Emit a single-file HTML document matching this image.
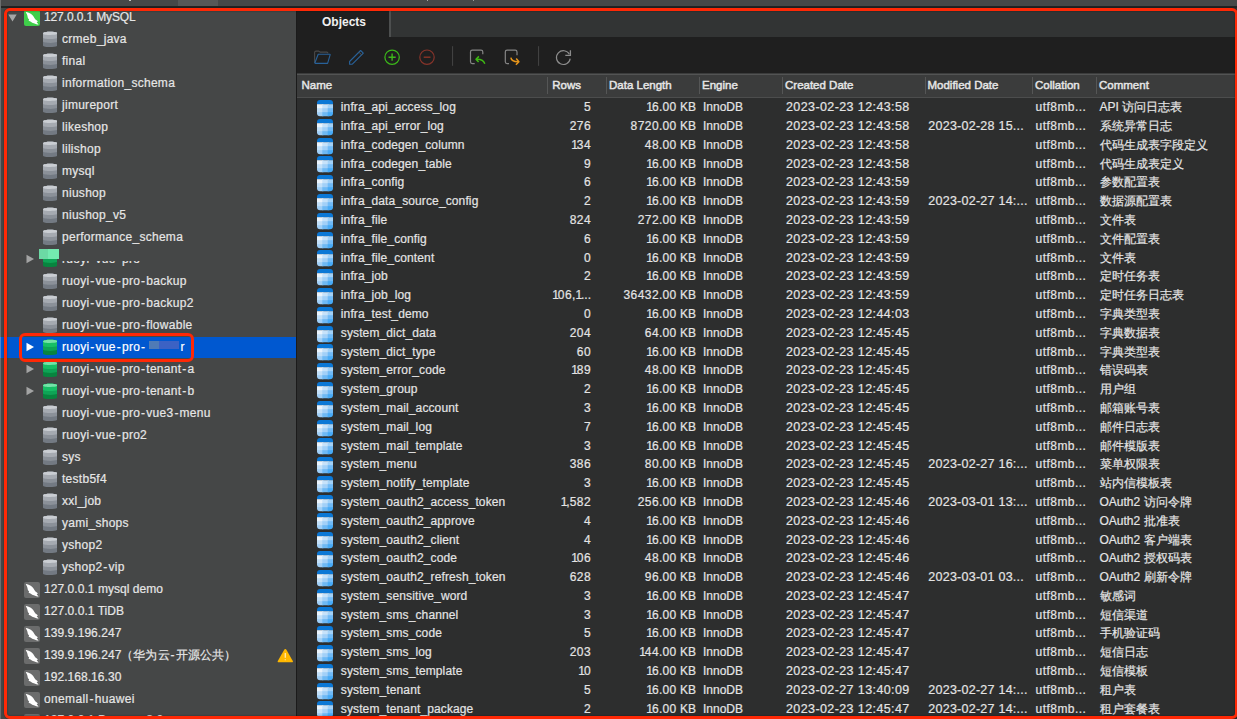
<!DOCTYPE html><html><head><meta charset="utf-8"><style>
html,body{margin:0;padding:0;}
body{width:1237px;height:719px;overflow:hidden;position:relative;background:#2d2e2e;font-family:"Liberation Sans",sans-serif;}
.ab{position:absolute;display:block;}
.t{position:absolute;white-space:pre;font-size:12px;line-height:20px;color:#e4e4e4;-webkit-text-stroke:0.2px currentColor;}
.hy{margin:0 0.95px;}
.sb{position:absolute;white-space:pre;font-size:12px;line-height:22px;color:#e6e6e6;letter-spacing:0.28px;-webkit-text-stroke:0.2px currentColor;}
</style></head><body>
<div class="ab" style="left:0;top:0;width:1237px;height:6px;background:#464848"></div>
<div class="ab" style="left:178px;top:0;width:40.3px;height:5.6px;background:#565858"></div>
<div class="ab" style="left:129px;top:0;width:1.6px;height:1.4px;border-radius:1px;background:#d8d8d8"></div>
<div class="ab" style="left:426.5px;top:0;width:1.5px;height:1.3px;border-radius:1px;background:#c8c8c8"></div>
<div class="ab" style="left:472.5px;top:0;width:1.3px;height:1.3px;border-radius:1px;background:#b8b8b8"></div>
<div class="ab" style="left:0;top:6px;width:1237px;height:2px;background:#232424"></div>
<div class="ab" style="left:0;top:8px;width:296px;height:711px;background:#454747"></div>
<div class="ab" style="left:0;top:0;width:1.3px;height:719px;background:#6c6e6e"></div>
<div class="ab" style="left:296px;top:8px;width:1px;height:711px;background:#1b1b1b"></div>
<div class="ab" style="left:0;top:336.80px;width:296px;height:21.4px;background:#0058d0"></div>
<div class="ab" style="left:0;top:336.80px;width:1.3px;height:21.4px;background:#4d86d6"></div>
<svg class="ab" style="left:8px;top:13.80px" width="9" height="8" viewBox="0 0 9 8"><path d="M0.3 0.5 L8.7 0.5 L4.5 7.5 Z" fill="#a5a6a6"/></svg>
<svg class="ab" style="left:24px;top:10.1px" width="16" height="16" viewBox="0 0 16 16"><rect x="0" y="0" width="16" height="16" rx="2" fill="#3fcf4a"/><path d="M1.8 1.95 C2.6 2 3.5 2.2 5.15 2.92 C6 3.3 6.6 3.6 7.1 4 C8.9 5.4 9.7 6.7 10.4 8.1 C11 9.2 11.8 10 12.9 10.6 L13.9 11.4 L12.7 12.2 L14.6 14.5 C13.8 14.4 13 14.3 12.4 14.2 C11.5 14 10.6 13.7 9.9 13.35 C9.1 13 8.5 12.8 7.9 12.5 C7.4 12.2 6.9 11.8 6.5 11.4 L4.6 10.85 L5.15 9.46 C4.6 9.1 4.2 8.7 4.0 8.35 C3.7 7.6 3.5 6.8 3.5 6.1 C3.3 5.4 3.2 4.8 2.9 4.2 C2.6 3.6 2.3 3.2 2.1 2.8 Z" fill="#fff"/></svg>
<div class="sb" style="left:44px;top:5.93px;letter-spacing:-0.12px">127.0.0.1 MySQL</div>
<svg class="ab" style="left:42.9px;top:31.289999999999996px" width="14.5" height="16.5" viewBox="0 0 14.5 16.5"><path d="M0 2.4 C0 0.3 14.5 0.3 14.5 2.4 L14.5 14.4 C14.5 16.6 0 16.6 0 14.4 Z" fill="#737a83"/><path d="M0 2.4 C0 0.3 14.5 0.3 14.5 2.4 L14.5 10.6 C14.5 12.3 0 12.3 0 10.6 Z" fill="#8b9199"/><path d="M0 2.4 C0 0.3 14.5 0.3 14.5 2.4 L14.5 6.8 C14.5 8.5 0 8.5 0 6.8 Z" fill="#a5aab1"/><path d="M0 2.4 C0 0.3 14.5 0.3 14.5 2.4 C14.5 4.4 0 4.4 0 2.4 Z" fill="#c9cdd2"/></svg>
<div class="sb" style="left:62px;top:27.92px">crmeb_java</div>
<svg class="ab" style="left:42.9px;top:53.279999999999994px" width="14.5" height="16.5" viewBox="0 0 14.5 16.5"><path d="M0 2.4 C0 0.3 14.5 0.3 14.5 2.4 L14.5 14.4 C14.5 16.6 0 16.6 0 14.4 Z" fill="#737a83"/><path d="M0 2.4 C0 0.3 14.5 0.3 14.5 2.4 L14.5 10.6 C14.5 12.3 0 12.3 0 10.6 Z" fill="#8b9199"/><path d="M0 2.4 C0 0.3 14.5 0.3 14.5 2.4 L14.5 6.8 C14.5 8.5 0 8.5 0 6.8 Z" fill="#a5aab1"/><path d="M0 2.4 C0 0.3 14.5 0.3 14.5 2.4 C14.5 4.4 0 4.4 0 2.4 Z" fill="#c9cdd2"/></svg>
<div class="sb" style="left:62px;top:49.91px">final</div>
<svg class="ab" style="left:42.9px;top:75.27px" width="14.5" height="16.5" viewBox="0 0 14.5 16.5"><path d="M0 2.4 C0 0.3 14.5 0.3 14.5 2.4 L14.5 14.4 C14.5 16.6 0 16.6 0 14.4 Z" fill="#737a83"/><path d="M0 2.4 C0 0.3 14.5 0.3 14.5 2.4 L14.5 10.6 C14.5 12.3 0 12.3 0 10.6 Z" fill="#8b9199"/><path d="M0 2.4 C0 0.3 14.5 0.3 14.5 2.4 L14.5 6.8 C14.5 8.5 0 8.5 0 6.8 Z" fill="#a5aab1"/><path d="M0 2.4 C0 0.3 14.5 0.3 14.5 2.4 C14.5 4.4 0 4.4 0 2.4 Z" fill="#c9cdd2"/></svg>
<div class="sb" style="left:62px;top:71.90px">information_schema</div>
<svg class="ab" style="left:42.9px;top:97.25999999999999px" width="14.5" height="16.5" viewBox="0 0 14.5 16.5"><path d="M0 2.4 C0 0.3 14.5 0.3 14.5 2.4 L14.5 14.4 C14.5 16.6 0 16.6 0 14.4 Z" fill="#737a83"/><path d="M0 2.4 C0 0.3 14.5 0.3 14.5 2.4 L14.5 10.6 C14.5 12.3 0 12.3 0 10.6 Z" fill="#8b9199"/><path d="M0 2.4 C0 0.3 14.5 0.3 14.5 2.4 L14.5 6.8 C14.5 8.5 0 8.5 0 6.8 Z" fill="#a5aab1"/><path d="M0 2.4 C0 0.3 14.5 0.3 14.5 2.4 C14.5 4.4 0 4.4 0 2.4 Z" fill="#c9cdd2"/></svg>
<div class="sb" style="left:62px;top:93.89px">jimureport</div>
<svg class="ab" style="left:42.9px;top:119.24999999999999px" width="14.5" height="16.5" viewBox="0 0 14.5 16.5"><path d="M0 2.4 C0 0.3 14.5 0.3 14.5 2.4 L14.5 14.4 C14.5 16.6 0 16.6 0 14.4 Z" fill="#737a83"/><path d="M0 2.4 C0 0.3 14.5 0.3 14.5 2.4 L14.5 10.6 C14.5 12.3 0 12.3 0 10.6 Z" fill="#8b9199"/><path d="M0 2.4 C0 0.3 14.5 0.3 14.5 2.4 L14.5 6.8 C14.5 8.5 0 8.5 0 6.8 Z" fill="#a5aab1"/><path d="M0 2.4 C0 0.3 14.5 0.3 14.5 2.4 C14.5 4.4 0 4.4 0 2.4 Z" fill="#c9cdd2"/></svg>
<div class="sb" style="left:62px;top:115.88px">likeshop</div>
<svg class="ab" style="left:42.9px;top:141.24px" width="14.5" height="16.5" viewBox="0 0 14.5 16.5"><path d="M0 2.4 C0 0.3 14.5 0.3 14.5 2.4 L14.5 14.4 C14.5 16.6 0 16.6 0 14.4 Z" fill="#737a83"/><path d="M0 2.4 C0 0.3 14.5 0.3 14.5 2.4 L14.5 10.6 C14.5 12.3 0 12.3 0 10.6 Z" fill="#8b9199"/><path d="M0 2.4 C0 0.3 14.5 0.3 14.5 2.4 L14.5 6.8 C14.5 8.5 0 8.5 0 6.8 Z" fill="#a5aab1"/><path d="M0 2.4 C0 0.3 14.5 0.3 14.5 2.4 C14.5 4.4 0 4.4 0 2.4 Z" fill="#c9cdd2"/></svg>
<div class="sb" style="left:62px;top:137.87px">lilishop</div>
<svg class="ab" style="left:42.9px;top:163.23px" width="14.5" height="16.5" viewBox="0 0 14.5 16.5"><path d="M0 2.4 C0 0.3 14.5 0.3 14.5 2.4 L14.5 14.4 C14.5 16.6 0 16.6 0 14.4 Z" fill="#737a83"/><path d="M0 2.4 C0 0.3 14.5 0.3 14.5 2.4 L14.5 10.6 C14.5 12.3 0 12.3 0 10.6 Z" fill="#8b9199"/><path d="M0 2.4 C0 0.3 14.5 0.3 14.5 2.4 L14.5 6.8 C14.5 8.5 0 8.5 0 6.8 Z" fill="#a5aab1"/><path d="M0 2.4 C0 0.3 14.5 0.3 14.5 2.4 C14.5 4.4 0 4.4 0 2.4 Z" fill="#c9cdd2"/></svg>
<div class="sb" style="left:62px;top:159.86px">mysql</div>
<svg class="ab" style="left:42.9px;top:185.22px" width="14.5" height="16.5" viewBox="0 0 14.5 16.5"><path d="M0 2.4 C0 0.3 14.5 0.3 14.5 2.4 L14.5 14.4 C14.5 16.6 0 16.6 0 14.4 Z" fill="#737a83"/><path d="M0 2.4 C0 0.3 14.5 0.3 14.5 2.4 L14.5 10.6 C14.5 12.3 0 12.3 0 10.6 Z" fill="#8b9199"/><path d="M0 2.4 C0 0.3 14.5 0.3 14.5 2.4 L14.5 6.8 C14.5 8.5 0 8.5 0 6.8 Z" fill="#a5aab1"/><path d="M0 2.4 C0 0.3 14.5 0.3 14.5 2.4 C14.5 4.4 0 4.4 0 2.4 Z" fill="#c9cdd2"/></svg>
<div class="sb" style="left:62px;top:181.85px">niushop</div>
<svg class="ab" style="left:42.9px;top:207.21px" width="14.5" height="16.5" viewBox="0 0 14.5 16.5"><path d="M0 2.4 C0 0.3 14.5 0.3 14.5 2.4 L14.5 14.4 C14.5 16.6 0 16.6 0 14.4 Z" fill="#737a83"/><path d="M0 2.4 C0 0.3 14.5 0.3 14.5 2.4 L14.5 10.6 C14.5 12.3 0 12.3 0 10.6 Z" fill="#8b9199"/><path d="M0 2.4 C0 0.3 14.5 0.3 14.5 2.4 L14.5 6.8 C14.5 8.5 0 8.5 0 6.8 Z" fill="#a5aab1"/><path d="M0 2.4 C0 0.3 14.5 0.3 14.5 2.4 C14.5 4.4 0 4.4 0 2.4 Z" fill="#c9cdd2"/></svg>
<div class="sb" style="left:62px;top:203.84px">niushop_v5</div>
<svg class="ab" style="left:42.9px;top:229.2px" width="14.5" height="16.5" viewBox="0 0 14.5 16.5"><path d="M0 2.4 C0 0.3 14.5 0.3 14.5 2.4 L14.5 14.4 C14.5 16.6 0 16.6 0 14.4 Z" fill="#737a83"/><path d="M0 2.4 C0 0.3 14.5 0.3 14.5 2.4 L14.5 10.6 C14.5 12.3 0 12.3 0 10.6 Z" fill="#8b9199"/><path d="M0 2.4 C0 0.3 14.5 0.3 14.5 2.4 L14.5 6.8 C14.5 8.5 0 8.5 0 6.8 Z" fill="#a5aab1"/><path d="M0 2.4 C0 0.3 14.5 0.3 14.5 2.4 C14.5 4.4 0 4.4 0 2.4 Z" fill="#c9cdd2"/></svg>
<div class="sb" style="left:62px;top:225.83px">performance_schema</div>
<svg class="ab" style="left:26.3px;top:254.49px" width="9" height="10" viewBox="0 0 9 10"><path d="M0.5 0.8 L8 5 L0.5 9.2 Z" fill="#a3a4a4"/></svg>
<svg class="ab" style="left:42.9px;top:251.19px" width="14.5" height="16.5" viewBox="0 0 14.5 16.5"><path d="M0 2.4 C0 0.3 14.5 0.3 14.5 2.4 L14.5 14.4 C14.5 16.6 0 16.6 0 14.4 Z" fill="#08843f"/><path d="M0 2.4 C0 0.3 14.5 0.3 14.5 2.4 L14.5 10.6 C14.5 12.3 0 12.3 0 10.6 Z" fill="#0ea456"/><path d="M0 2.4 C0 0.3 14.5 0.3 14.5 2.4 L14.5 6.8 C14.5 8.5 0 8.5 0 6.8 Z" fill="#17bf66"/><path d="M0 2.4 C0 0.3 14.5 0.3 14.5 2.4 C14.5 4.4 0 4.4 0 2.4 Z" fill="#74e2a8"/></svg>
<div class="sb" style="left:62px;top:247.82px;">ruoyi<span class=hy>-</span>vue<span class=hy>-</span>pro</div>
<svg class="ab" style="left:42.9px;top:273.18px" width="14.5" height="16.5" viewBox="0 0 14.5 16.5"><path d="M0 2.4 C0 0.3 14.5 0.3 14.5 2.4 L14.5 14.4 C14.5 16.6 0 16.6 0 14.4 Z" fill="#737a83"/><path d="M0 2.4 C0 0.3 14.5 0.3 14.5 2.4 L14.5 10.6 C14.5 12.3 0 12.3 0 10.6 Z" fill="#8b9199"/><path d="M0 2.4 C0 0.3 14.5 0.3 14.5 2.4 L14.5 6.8 C14.5 8.5 0 8.5 0 6.8 Z" fill="#a5aab1"/><path d="M0 2.4 C0 0.3 14.5 0.3 14.5 2.4 C14.5 4.4 0 4.4 0 2.4 Z" fill="#c9cdd2"/></svg>
<div class="sb" style="left:62px;top:269.81px">ruoyi<span class=hy>-</span>vue<span class=hy>-</span>pro<span class=hy>-</span>backup</div>
<svg class="ab" style="left:42.9px;top:295.17px" width="14.5" height="16.5" viewBox="0 0 14.5 16.5"><path d="M0 2.4 C0 0.3 14.5 0.3 14.5 2.4 L14.5 14.4 C14.5 16.6 0 16.6 0 14.4 Z" fill="#737a83"/><path d="M0 2.4 C0 0.3 14.5 0.3 14.5 2.4 L14.5 10.6 C14.5 12.3 0 12.3 0 10.6 Z" fill="#8b9199"/><path d="M0 2.4 C0 0.3 14.5 0.3 14.5 2.4 L14.5 6.8 C14.5 8.5 0 8.5 0 6.8 Z" fill="#a5aab1"/><path d="M0 2.4 C0 0.3 14.5 0.3 14.5 2.4 C14.5 4.4 0 4.4 0 2.4 Z" fill="#c9cdd2"/></svg>
<div class="sb" style="left:62px;top:291.80px">ruoyi<span class=hy>-</span>vue<span class=hy>-</span>pro<span class=hy>-</span>backup2</div>
<svg class="ab" style="left:42.9px;top:317.15999999999997px" width="14.5" height="16.5" viewBox="0 0 14.5 16.5"><path d="M0 2.4 C0 0.3 14.5 0.3 14.5 2.4 L14.5 14.4 C14.5 16.6 0 16.6 0 14.4 Z" fill="#737a83"/><path d="M0 2.4 C0 0.3 14.5 0.3 14.5 2.4 L14.5 10.6 C14.5 12.3 0 12.3 0 10.6 Z" fill="#8b9199"/><path d="M0 2.4 C0 0.3 14.5 0.3 14.5 2.4 L14.5 6.8 C14.5 8.5 0 8.5 0 6.8 Z" fill="#a5aab1"/><path d="M0 2.4 C0 0.3 14.5 0.3 14.5 2.4 C14.5 4.4 0 4.4 0 2.4 Z" fill="#c9cdd2"/></svg>
<div class="sb" style="left:62px;top:313.79px">ruoyi<span class=hy>-</span>vue<span class=hy>-</span>pro<span class=hy>-</span>flowable</div>
<svg class="ab" style="left:26.3px;top:342.45px" width="9" height="10" viewBox="0 0 9 10"><path d="M0.5 0.8 L8 5 L0.5 9.2 Z" fill="#ffffff"/></svg>
<svg class="ab" style="left:42.9px;top:339.15px" width="14.5" height="16.5" viewBox="0 0 14.5 16.5"><path d="M0 2.4 C0 0.3 14.5 0.3 14.5 2.4 L14.5 14.4 C14.5 16.6 0 16.6 0 14.4 Z" fill="#08843f"/><path d="M0 2.4 C0 0.3 14.5 0.3 14.5 2.4 L14.5 10.6 C14.5 12.3 0 12.3 0 10.6 Z" fill="#0ea456"/><path d="M0 2.4 C0 0.3 14.5 0.3 14.5 2.4 L14.5 6.8 C14.5 8.5 0 8.5 0 6.8 Z" fill="#17bf66"/><path d="M0 2.4 C0 0.3 14.5 0.3 14.5 2.4 C14.5 4.4 0 4.4 0 2.4 Z" fill="#74e2a8"/></svg>
<div class="sb" style="left:62px;top:335.78px;color:#fff">ruoyi<span class=hy>-</span>vue<span class=hy>-</span>pro<span class=hy>-</span></div>
<svg class="ab" style="left:26.3px;top:364.44px" width="9" height="10" viewBox="0 0 9 10"><path d="M0.5 0.8 L8 5 L0.5 9.2 Z" fill="#a3a4a4"/></svg>
<svg class="ab" style="left:42.9px;top:361.14px" width="14.5" height="16.5" viewBox="0 0 14.5 16.5"><path d="M0 2.4 C0 0.3 14.5 0.3 14.5 2.4 L14.5 14.4 C14.5 16.6 0 16.6 0 14.4 Z" fill="#08843f"/><path d="M0 2.4 C0 0.3 14.5 0.3 14.5 2.4 L14.5 10.6 C14.5 12.3 0 12.3 0 10.6 Z" fill="#0ea456"/><path d="M0 2.4 C0 0.3 14.5 0.3 14.5 2.4 L14.5 6.8 C14.5 8.5 0 8.5 0 6.8 Z" fill="#17bf66"/><path d="M0 2.4 C0 0.3 14.5 0.3 14.5 2.4 C14.5 4.4 0 4.4 0 2.4 Z" fill="#74e2a8"/></svg>
<div class="sb" style="left:62px;top:357.77px;">ruoyi<span class=hy>-</span>vue<span class=hy>-</span>pro<span class=hy>-</span>tenant<span class=hy>-</span>a</div>
<svg class="ab" style="left:26.3px;top:386.43px" width="9" height="10" viewBox="0 0 9 10"><path d="M0.5 0.8 L8 5 L0.5 9.2 Z" fill="#a3a4a4"/></svg>
<svg class="ab" style="left:42.9px;top:383.13px" width="14.5" height="16.5" viewBox="0 0 14.5 16.5"><path d="M0 2.4 C0 0.3 14.5 0.3 14.5 2.4 L14.5 14.4 C14.5 16.6 0 16.6 0 14.4 Z" fill="#08843f"/><path d="M0 2.4 C0 0.3 14.5 0.3 14.5 2.4 L14.5 10.6 C14.5 12.3 0 12.3 0 10.6 Z" fill="#0ea456"/><path d="M0 2.4 C0 0.3 14.5 0.3 14.5 2.4 L14.5 6.8 C14.5 8.5 0 8.5 0 6.8 Z" fill="#17bf66"/><path d="M0 2.4 C0 0.3 14.5 0.3 14.5 2.4 C14.5 4.4 0 4.4 0 2.4 Z" fill="#74e2a8"/></svg>
<div class="sb" style="left:62px;top:379.76px;">ruoyi<span class=hy>-</span>vue<span class=hy>-</span>pro<span class=hy>-</span>tenant<span class=hy>-</span>b</div>
<svg class="ab" style="left:42.9px;top:405.12px" width="14.5" height="16.5" viewBox="0 0 14.5 16.5"><path d="M0 2.4 C0 0.3 14.5 0.3 14.5 2.4 L14.5 14.4 C14.5 16.6 0 16.6 0 14.4 Z" fill="#737a83"/><path d="M0 2.4 C0 0.3 14.5 0.3 14.5 2.4 L14.5 10.6 C14.5 12.3 0 12.3 0 10.6 Z" fill="#8b9199"/><path d="M0 2.4 C0 0.3 14.5 0.3 14.5 2.4 L14.5 6.8 C14.5 8.5 0 8.5 0 6.8 Z" fill="#a5aab1"/><path d="M0 2.4 C0 0.3 14.5 0.3 14.5 2.4 C14.5 4.4 0 4.4 0 2.4 Z" fill="#c9cdd2"/></svg>
<div class="sb" style="left:62px;top:401.75px">ruoyi<span class=hy>-</span>vue<span class=hy>-</span>pro<span class=hy>-</span>vue3<span class=hy>-</span>menu</div>
<svg class="ab" style="left:42.9px;top:427.10999999999996px" width="14.5" height="16.5" viewBox="0 0 14.5 16.5"><path d="M0 2.4 C0 0.3 14.5 0.3 14.5 2.4 L14.5 14.4 C14.5 16.6 0 16.6 0 14.4 Z" fill="#737a83"/><path d="M0 2.4 C0 0.3 14.5 0.3 14.5 2.4 L14.5 10.6 C14.5 12.3 0 12.3 0 10.6 Z" fill="#8b9199"/><path d="M0 2.4 C0 0.3 14.5 0.3 14.5 2.4 L14.5 6.8 C14.5 8.5 0 8.5 0 6.8 Z" fill="#a5aab1"/><path d="M0 2.4 C0 0.3 14.5 0.3 14.5 2.4 C14.5 4.4 0 4.4 0 2.4 Z" fill="#c9cdd2"/></svg>
<div class="sb" style="left:62px;top:423.74px">ruoyi<span class=hy>-</span>vue<span class=hy>-</span>pro2</div>
<svg class="ab" style="left:42.9px;top:449.09999999999997px" width="14.5" height="16.5" viewBox="0 0 14.5 16.5"><path d="M0 2.4 C0 0.3 14.5 0.3 14.5 2.4 L14.5 14.4 C14.5 16.6 0 16.6 0 14.4 Z" fill="#737a83"/><path d="M0 2.4 C0 0.3 14.5 0.3 14.5 2.4 L14.5 10.6 C14.5 12.3 0 12.3 0 10.6 Z" fill="#8b9199"/><path d="M0 2.4 C0 0.3 14.5 0.3 14.5 2.4 L14.5 6.8 C14.5 8.5 0 8.5 0 6.8 Z" fill="#a5aab1"/><path d="M0 2.4 C0 0.3 14.5 0.3 14.5 2.4 C14.5 4.4 0 4.4 0 2.4 Z" fill="#c9cdd2"/></svg>
<div class="sb" style="left:62px;top:445.73px">sys</div>
<svg class="ab" style="left:42.9px;top:471.09px" width="14.5" height="16.5" viewBox="0 0 14.5 16.5"><path d="M0 2.4 C0 0.3 14.5 0.3 14.5 2.4 L14.5 14.4 C14.5 16.6 0 16.6 0 14.4 Z" fill="#737a83"/><path d="M0 2.4 C0 0.3 14.5 0.3 14.5 2.4 L14.5 10.6 C14.5 12.3 0 12.3 0 10.6 Z" fill="#8b9199"/><path d="M0 2.4 C0 0.3 14.5 0.3 14.5 2.4 L14.5 6.8 C14.5 8.5 0 8.5 0 6.8 Z" fill="#a5aab1"/><path d="M0 2.4 C0 0.3 14.5 0.3 14.5 2.4 C14.5 4.4 0 4.4 0 2.4 Z" fill="#c9cdd2"/></svg>
<div class="sb" style="left:62px;top:467.72px">testb5f4</div>
<svg class="ab" style="left:42.9px;top:493.08px" width="14.5" height="16.5" viewBox="0 0 14.5 16.5"><path d="M0 2.4 C0 0.3 14.5 0.3 14.5 2.4 L14.5 14.4 C14.5 16.6 0 16.6 0 14.4 Z" fill="#737a83"/><path d="M0 2.4 C0 0.3 14.5 0.3 14.5 2.4 L14.5 10.6 C14.5 12.3 0 12.3 0 10.6 Z" fill="#8b9199"/><path d="M0 2.4 C0 0.3 14.5 0.3 14.5 2.4 L14.5 6.8 C14.5 8.5 0 8.5 0 6.8 Z" fill="#a5aab1"/><path d="M0 2.4 C0 0.3 14.5 0.3 14.5 2.4 C14.5 4.4 0 4.4 0 2.4 Z" fill="#c9cdd2"/></svg>
<div class="sb" style="left:62px;top:489.71px">xxl_job</div>
<svg class="ab" style="left:42.9px;top:515.0699999999999px" width="14.5" height="16.5" viewBox="0 0 14.5 16.5"><path d="M0 2.4 C0 0.3 14.5 0.3 14.5 2.4 L14.5 14.4 C14.5 16.6 0 16.6 0 14.4 Z" fill="#737a83"/><path d="M0 2.4 C0 0.3 14.5 0.3 14.5 2.4 L14.5 10.6 C14.5 12.3 0 12.3 0 10.6 Z" fill="#8b9199"/><path d="M0 2.4 C0 0.3 14.5 0.3 14.5 2.4 L14.5 6.8 C14.5 8.5 0 8.5 0 6.8 Z" fill="#a5aab1"/><path d="M0 2.4 C0 0.3 14.5 0.3 14.5 2.4 C14.5 4.4 0 4.4 0 2.4 Z" fill="#c9cdd2"/></svg>
<div class="sb" style="left:62px;top:511.70px">yami_shops</div>
<svg class="ab" style="left:42.9px;top:537.06px" width="14.5" height="16.5" viewBox="0 0 14.5 16.5"><path d="M0 2.4 C0 0.3 14.5 0.3 14.5 2.4 L14.5 14.4 C14.5 16.6 0 16.6 0 14.4 Z" fill="#737a83"/><path d="M0 2.4 C0 0.3 14.5 0.3 14.5 2.4 L14.5 10.6 C14.5 12.3 0 12.3 0 10.6 Z" fill="#8b9199"/><path d="M0 2.4 C0 0.3 14.5 0.3 14.5 2.4 L14.5 6.8 C14.5 8.5 0 8.5 0 6.8 Z" fill="#a5aab1"/><path d="M0 2.4 C0 0.3 14.5 0.3 14.5 2.4 C14.5 4.4 0 4.4 0 2.4 Z" fill="#c9cdd2"/></svg>
<div class="sb" style="left:62px;top:533.69px">yshop2</div>
<svg class="ab" style="left:42.9px;top:559.05px" width="14.5" height="16.5" viewBox="0 0 14.5 16.5"><path d="M0 2.4 C0 0.3 14.5 0.3 14.5 2.4 L14.5 14.4 C14.5 16.6 0 16.6 0 14.4 Z" fill="#737a83"/><path d="M0 2.4 C0 0.3 14.5 0.3 14.5 2.4 L14.5 10.6 C14.5 12.3 0 12.3 0 10.6 Z" fill="#8b9199"/><path d="M0 2.4 C0 0.3 14.5 0.3 14.5 2.4 L14.5 6.8 C14.5 8.5 0 8.5 0 6.8 Z" fill="#a5aab1"/><path d="M0 2.4 C0 0.3 14.5 0.3 14.5 2.4 C14.5 4.4 0 4.4 0 2.4 Z" fill="#c9cdd2"/></svg>
<div class="sb" style="left:62px;top:555.68px">yshop2<span class=hy>-</span>vip</div>
<svg class="ab" style="left:24.1px;top:581.84px" width="16" height="16" viewBox="0 0 16 16"><rect x="0" y="0" width="16" height="16" rx="2" fill="#6b6c6c"/><path d="M1.8 1.95 C2.6 2 3.5 2.2 5.15 2.92 C6 3.3 6.6 3.6 7.1 4 C8.9 5.4 9.7 6.7 10.4 8.1 C11 9.2 11.8 10 12.9 10.6 L13.9 11.4 L12.7 12.2 L14.6 14.5 C13.8 14.4 13 14.3 12.4 14.2 C11.5 14 10.6 13.7 9.9 13.35 C9.1 13 8.5 12.8 7.9 12.5 C7.4 12.2 6.9 11.8 6.5 11.4 L4.6 10.85 L5.15 9.46 C4.6 9.1 4.2 8.7 4.0 8.35 C3.7 7.6 3.5 6.8 3.5 6.1 C3.3 5.4 3.2 4.8 2.9 4.2 C2.6 3.6 2.3 3.2 2.1 2.8 Z" fill="#fff"/></svg>
<div class="sb" style="left:44px;top:577.67px;letter-spacing:0.05px">127.0.0.1 mysql demo</div>
<svg class="ab" style="left:24.1px;top:603.8299999999999px" width="16" height="16" viewBox="0 0 16 16"><rect x="0" y="0" width="16" height="16" rx="2" fill="#6b6c6c"/><path d="M1.8 1.95 C2.6 2 3.5 2.2 5.15 2.92 C6 3.3 6.6 3.6 7.1 4 C8.9 5.4 9.7 6.7 10.4 8.1 C11 9.2 11.8 10 12.9 10.6 L13.9 11.4 L12.7 12.2 L14.6 14.5 C13.8 14.4 13 14.3 12.4 14.2 C11.5 14 10.6 13.7 9.9 13.35 C9.1 13 8.5 12.8 7.9 12.5 C7.4 12.2 6.9 11.8 6.5 11.4 L4.6 10.85 L5.15 9.46 C4.6 9.1 4.2 8.7 4.0 8.35 C3.7 7.6 3.5 6.8 3.5 6.1 C3.3 5.4 3.2 4.8 2.9 4.2 C2.6 3.6 2.3 3.2 2.1 2.8 Z" fill="#fff"/></svg>
<div class="sb" style="left:44px;top:599.66px;letter-spacing:0.05px">127.0.0.1 TiDB</div>
<svg class="ab" style="left:24.1px;top:625.8199999999999px" width="16" height="16" viewBox="0 0 16 16"><rect x="0" y="0" width="16" height="16" rx="2" fill="#6b6c6c"/><path d="M1.8 1.95 C2.6 2 3.5 2.2 5.15 2.92 C6 3.3 6.6 3.6 7.1 4 C8.9 5.4 9.7 6.7 10.4 8.1 C11 9.2 11.8 10 12.9 10.6 L13.9 11.4 L12.7 12.2 L14.6 14.5 C13.8 14.4 13 14.3 12.4 14.2 C11.5 14 10.6 13.7 9.9 13.35 C9.1 13 8.5 12.8 7.9 12.5 C7.4 12.2 6.9 11.8 6.5 11.4 L4.6 10.85 L5.15 9.46 C4.6 9.1 4.2 8.7 4.0 8.35 C3.7 7.6 3.5 6.8 3.5 6.1 C3.3 5.4 3.2 4.8 2.9 4.2 C2.6 3.6 2.3 3.2 2.1 2.8 Z" fill="#fff"/></svg>
<div class="sb" style="left:44px;top:621.65px;letter-spacing:0.05px">139.9.196.247</div>
<svg class="ab" style="left:24.1px;top:647.81px" width="16" height="16" viewBox="0 0 16 16"><rect x="0" y="0" width="16" height="16" rx="2" fill="#6b6c6c"/><path d="M1.8 1.95 C2.6 2 3.5 2.2 5.15 2.92 C6 3.3 6.6 3.6 7.1 4 C8.9 5.4 9.7 6.7 10.4 8.1 C11 9.2 11.8 10 12.9 10.6 L13.9 11.4 L12.7 12.2 L14.6 14.5 C13.8 14.4 13 14.3 12.4 14.2 C11.5 14 10.6 13.7 9.9 13.35 C9.1 13 8.5 12.8 7.9 12.5 C7.4 12.2 6.9 11.8 6.5 11.4 L4.6 10.85 L5.15 9.46 C4.6 9.1 4.2 8.7 4.0 8.35 C3.7 7.6 3.5 6.8 3.5 6.1 C3.3 5.4 3.2 4.8 2.9 4.2 C2.6 3.6 2.3 3.2 2.1 2.8 Z" fill="#fff"/></svg>
<div class="sb" style="left:44px;top:643.64px;letter-spacing:0.05px">139.9.196.247（华为云<span class=hy>-</span>开源公共）</div>
<svg class="ab" style="left:24.1px;top:669.8px" width="16" height="16" viewBox="0 0 16 16"><rect x="0" y="0" width="16" height="16" rx="2" fill="#6b6c6c"/><path d="M1.8 1.95 C2.6 2 3.5 2.2 5.15 2.92 C6 3.3 6.6 3.6 7.1 4 C8.9 5.4 9.7 6.7 10.4 8.1 C11 9.2 11.8 10 12.9 10.6 L13.9 11.4 L12.7 12.2 L14.6 14.5 C13.8 14.4 13 14.3 12.4 14.2 C11.5 14 10.6 13.7 9.9 13.35 C9.1 13 8.5 12.8 7.9 12.5 C7.4 12.2 6.9 11.8 6.5 11.4 L4.6 10.85 L5.15 9.46 C4.6 9.1 4.2 8.7 4.0 8.35 C3.7 7.6 3.5 6.8 3.5 6.1 C3.3 5.4 3.2 4.8 2.9 4.2 C2.6 3.6 2.3 3.2 2.1 2.8 Z" fill="#fff"/></svg>
<div class="sb" style="left:44px;top:665.63px;letter-spacing:0.05px">192.168.16.30</div>
<svg class="ab" style="left:24.1px;top:691.79px" width="16" height="16" viewBox="0 0 16 16"><rect x="0" y="0" width="16" height="16" rx="2" fill="#6b6c6c"/><path d="M1.8 1.95 C2.6 2 3.5 2.2 5.15 2.92 C6 3.3 6.6 3.6 7.1 4 C8.9 5.4 9.7 6.7 10.4 8.1 C11 9.2 11.8 10 12.9 10.6 L13.9 11.4 L12.7 12.2 L14.6 14.5 C13.8 14.4 13 14.3 12.4 14.2 C11.5 14 10.6 13.7 9.9 13.35 C9.1 13 8.5 12.8 7.9 12.5 C7.4 12.2 6.9 11.8 6.5 11.4 L4.6 10.85 L5.15 9.46 C4.6 9.1 4.2 8.7 4.0 8.35 C3.7 7.6 3.5 6.8 3.5 6.1 C3.3 5.4 3.2 4.8 2.9 4.2 C2.6 3.6 2.3 3.2 2.1 2.8 Z" fill="#fff"/></svg>
<div class="sb" style="left:44px;top:687.62px;letter-spacing:0.35px">onemall<span class=hy>-</span>huawei</div>
<svg class="ab" style="left:24.1px;top:713.78px" width="16" height="16" viewBox="0 0 16 16"><rect x="0" y="0" width="16" height="16" rx="2" fill="#6b6c6c"/><path d="M1.8 1.95 C2.6 2 3.5 2.2 5.15 2.92 C6 3.3 6.6 3.6 7.1 4 C8.9 5.4 9.7 6.7 10.4 8.1 C11 9.2 11.8 10 12.9 10.6 L13.9 11.4 L12.7 12.2 L14.6 14.5 C13.8 14.4 13 14.3 12.4 14.2 C11.5 14 10.6 13.7 9.9 13.35 C9.1 13 8.5 12.8 7.9 12.5 C7.4 12.2 6.9 11.8 6.5 11.4 L4.6 10.85 L5.15 9.46 C4.6 9.1 4.2 8.7 4.0 8.35 C3.7 7.6 3.5 6.8 3.5 6.1 C3.3 5.4 3.2 4.8 2.9 4.2 C2.6 3.6 2.3 3.2 2.1 2.8 Z" fill="#fff"/></svg>
<div class="sb" style="left:44px;top:708.91px;letter-spacing:0.05px">127.0.0.1 Percona 8.0</div>
<div class="ab" style="left:60px;top:247.89px;width:120px;height:13.6px;background:#454747"></div>
<div class="ab" style="left:38.8px;top:248.79px;width:20.3px;height:10.4px;background:#74eab0"></div>
<div class="ab" style="left:38.8px;top:248.79px;width:9px;height:10.4px;background:#6cd9a4"></div>
<div class="ab" style="left:149.1px;top:341.2px;width:29.8px;height:8.2px;background:#3c62c4"></div>
<div class="ab" style="left:149.1px;top:341.2px;width:9.8px;height:8.2px;background:#4f7bb6"></div>
<div class="sb" style="left:180.5px;top:335.78px;color:#fff">r</div>
<svg class="ab" style="left:277px;top:647.6px" width="17" height="15" viewBox="0 0 17 15"><path d="M8.3 1 C8.8 1 9.1 1.2 9.4 1.7 L15.8 12.9 C16.2 13.7 15.8 14.3 14.9 14.3 L1.7 14.3 C0.8 14.3 0.4 13.7 0.8 12.9 L7.2 1.7 C7.5 1.2 7.8 1 8.3 1 Z" fill="#ffb800"/><rect x="7.6" y="5" width="1.4" height="4.8" fill="#ffe6a0"/><rect x="7.6" y="11" width="1.4" height="1.3" fill="#ffd870"/></svg>
<div class="ab" style="left:297px;top:8px;width:940px;height:29px;background:#323434"></div>
<div class="ab" style="left:297px;top:8px;width:92px;height:29px;background:#1f1f1f"></div>
<div class="ab" style="left:389px;top:11px;width:1.6px;height:26px;background:#4d4f4f"></div>
<div class="t" style="left:322px;top:12.33px;font-weight:bold;-webkit-text-stroke:0;color:#f0f0f0">Objects</div>
<div class="ab" style="left:297px;top:37px;width:940px;height:36px;background:#1f1f1f"></div>
<div class="ab" style="left:297px;top:73px;width:940px;height:24px;background:#3b3c3c"></div>
<div class="ab" style="left:297px;top:73.5px;width:940px;height:1.5px;background:#535454"></div>
<div class="ab" style="left:297px;top:97px;width:940px;height:1.2px;background:#4c4d4d"></div>
<div class="t" style="left:301.5px;top:75.30px;font-size:11.5px;-webkit-text-stroke:0.45px currentColor;color:#e6e6e6">Name</div>
<div class="t" style="left:552.3px;top:75.30px;font-size:11.5px;-webkit-text-stroke:0.45px currentColor;color:#e6e6e6">Rows</div>
<div class="t" style="left:609px;top:75.30px;font-size:11.5px;-webkit-text-stroke:0.45px currentColor;color:#e6e6e6">Data Length</div>
<div class="t" style="left:702px;top:75.30px;font-size:11.5px;-webkit-text-stroke:0.45px currentColor;color:#e6e6e6">Engine</div>
<div class="t" style="left:785px;top:75.30px;font-size:11.5px;-webkit-text-stroke:0.45px currentColor;color:#e6e6e6">Created Date</div>
<div class="t" style="left:927.5px;top:75.30px;font-size:11.5px;-webkit-text-stroke:0.45px currentColor;color:#e6e6e6">Modified Date</div>
<div class="t" style="left:1035px;top:75.30px;font-size:11.5px;-webkit-text-stroke:0.45px currentColor;color:#e6e6e6">Collation</div>
<div class="t" style="left:1099px;top:75.30px;font-size:11.5px;-webkit-text-stroke:0.45px currentColor;color:#e6e6e6">Comment</div>
<div class="ab" style="left:547.0px;top:77px;width:1px;height:17px;background:#555656"></div>
<div class="ab" style="left:605.8px;top:77px;width:1px;height:17px;background:#555656"></div>
<div class="ab" style="left:699.2px;top:77px;width:1px;height:17px;background:#555656"></div>
<div class="ab" style="left:782.0px;top:77px;width:1px;height:17px;background:#555656"></div>
<div class="ab" style="left:925.4px;top:77px;width:1px;height:17px;background:#555656"></div>
<div class="ab" style="left:1031.9px;top:77px;width:1px;height:17px;background:#555656"></div>
<div class="ab" style="left:1096.0px;top:77px;width:1px;height:17px;background:#555656"></div>
<svg class="ab" style="left:296px;top:37px" width="290" height="36" viewBox="0 0 290 36"><path d="M18.6 26 L18.6 15.6 C18.6 14.6 19.1 14.1 20.1 14.1 L22.6 14.1 L24.2 15.1 L30.8 15.1 C31.5 15.1 31.9 15.6 32 16.3" fill="none" stroke="#4a4a4a" stroke-width="1.1"/><path d="M22.2 17.2 L33.6 17.2 C34 17.2 34.2 17.5 34.1 17.9 L31.6 26.4 L19.4 26.4 C19 26.4 18.8 26.1 18.9 25.7 Z" fill="none" stroke="#28629a" stroke-width="1.1" stroke-linejoin="round"/><path d="M53.6 27.2 L53.6 24.5 L64.6 13.5 L67.3 16.2 L56.3 27.2 Z" fill="none" stroke="#28629a" stroke-width="1.1" stroke-linejoin="round"/><path d="M62.9 15.2 L65.6 17.9" stroke="#555" stroke-width="1"/><circle cx="96.1" cy="20.2" r="7.2" fill="none" stroke="#3cb81a" stroke-width="1.25"/><path d="M96.1 16.6 L96.1 23.8 M92.5 20.2 L99.7 20.2" stroke="#3cb81a" stroke-width="1.4"/><circle cx="131" cy="20.2" r="7.2" fill="none" stroke="#87342a" stroke-width="1.2"/><path d="M127.7 20.2 L134.5 20.2" stroke="#8f3526" stroke-width="1.35"/><rect x="156" y="9.2" width="1.1" height="19.6" fill="#414141"/><rect x="242" y="9.2" width="1.1" height="19.6" fill="#414141"/><path d="M178.7 26.6 L176.3 26.6 C175.1 26.6 174.5 26 174.5 24.8 L174.5 14.9 C174.5 13.7 175.1 13.1 176.3 13.1 L185 13.1 C186.2 13.1 186.8 13.7 186.8 14.9 L186.8 17.2" fill="none" stroke="#858585" stroke-width="1.2"/><path d="M180.6 22.2 C183.6 22.1 187.6 22.6 188.8 26.8" fill="none" stroke="#3fbb14" stroke-width="1.5"/><path d="M182.9 19.4 L180 22.2 L182.6 25" fill="none" stroke="#3fbb14" stroke-width="1.5" stroke-linejoin="round"/><path d="M213 26.6 L211.1 26.6 C209.9 26.6 209.3 26 209.3 24.8 L209.3 14.9 C209.3 13.7 209.9 13.1 211.1 13.1 L219.2 13.1 C220.4 13.1 221 13.7 221 14.9 L221 18.2" fill="none" stroke="#858585" stroke-width="1.2"/><path d="M214.9 20.6 C215.3 23.6 217.5 24.8 222.3 24.7" fill="none" stroke="#e8961a" stroke-width="1.5"/><path d="M220.2 21.6 L222.9 24.7 L219.9 27.8" fill="none" stroke="#e8961a" stroke-width="1.5" stroke-linejoin="round"/><path d="M273.4 17.2 A6.9 6.9 0 1 0 274.2 21.6" fill="none" stroke="#8c8c8c" stroke-width="1.2"/><path d="M274.4 13.2 L274.4 18.3 L269.3 18.3" fill="none" stroke="#8c8c8c" stroke-width="1.3"/></svg>
<svg class="ab" style="left:317px;top:100.1px" width="16" height="17" viewBox="0 0 16 17"><defs><clipPath id="tc1"><rect x="0" y="0" width="16" height="16.3" rx="3"/></clipPath></defs><g clip-path="url(#tc1)"><rect x="0" y="0" width="16" height="4.2" fill="#0b78d6"/><rect x="0" y="4.2" width="6.3" height="4.999999999999999" fill="#eaf4fd"/><rect x="5.3" y="4.2" width="6.3999999999999995" height="4.999999999999999" fill="#c6e2fa"/><rect x="10.7" y="4.2" width="6.300000000000001" height="4.999999999999999" fill="#a2d1f7"/><rect x="0" y="8.2" width="6.3" height="5.0" fill="#c2e0f9"/><rect x="5.3" y="8.2" width="6.3999999999999995" height="5.0" fill="#a2d0f8"/><rect x="10.7" y="8.2" width="6.300000000000001" height="5.0" fill="#70baf6"/><rect x="0" y="12.2" width="6.3" height="5.100000000000001" fill="#a0cff7"/><rect x="5.3" y="12.2" width="6.3999999999999995" height="5.100000000000001" fill="#6eb9f4"/><rect x="10.7" y="12.2" width="6.300000000000001" height="5.100000000000001" fill="#47aaf6"/></g></svg>
<div class="t" style="left:340.8px;top:97.33px;letter-spacing:0.12px">infra_api_access_log</div>
<div class="t" style="right:646.0px;top:97.33px;text-align:right"><span style="letter-spacing:0.45px">5</span></div>
<div class="t" style="right:541.0px;top:97.33px;text-align:right"><span style="letter-spacing:-1.1px">1</span><span style="letter-spacing:0.45px">6</span>.<span style="letter-spacing:0.45px">0</span><span style="letter-spacing:0.45px">0</span> KB</div>
<div class="t" style="left:703px;top:97.33px">InnoDB</div>
<div class="t" style="left:786px;top:97.33px;font-size:12.5px;letter-spacing:0.4px">2023-02-23 12:43:58</div>
<div class="t" style="left:1035.6px;top:97.33px;letter-spacing:0.45px">utf8mb...</div>
<div class="t" style="left:1099.5px;top:97.33px">API 访问日志表</div>
<svg class="ab" style="left:317px;top:118.88999999999999px" width="16" height="17" viewBox="0 0 16 17"><defs><clipPath id="tc2"><rect x="0" y="0" width="16" height="16.3" rx="3"/></clipPath></defs><g clip-path="url(#tc2)"><rect x="0" y="0" width="16" height="4.2" fill="#0b78d6"/><rect x="0" y="4.2" width="6.3" height="4.999999999999999" fill="#eaf4fd"/><rect x="5.3" y="4.2" width="6.3999999999999995" height="4.999999999999999" fill="#c6e2fa"/><rect x="10.7" y="4.2" width="6.300000000000001" height="4.999999999999999" fill="#a2d1f7"/><rect x="0" y="8.2" width="6.3" height="5.0" fill="#c2e0f9"/><rect x="5.3" y="8.2" width="6.3999999999999995" height="5.0" fill="#a2d0f8"/><rect x="10.7" y="8.2" width="6.300000000000001" height="5.0" fill="#70baf6"/><rect x="0" y="12.2" width="6.3" height="5.100000000000001" fill="#a0cff7"/><rect x="5.3" y="12.2" width="6.3999999999999995" height="5.100000000000001" fill="#6eb9f4"/><rect x="10.7" y="12.2" width="6.300000000000001" height="5.100000000000001" fill="#47aaf6"/></g></svg>
<div class="t" style="left:340.8px;top:116.12px;letter-spacing:0.12px">infra_api_error_log</div>
<div class="t" style="right:646.0px;top:116.12px;text-align:right"><span style="letter-spacing:0.45px">2</span><span style="letter-spacing:0.45px">7</span><span style="letter-spacing:0.45px">6</span></div>
<div class="t" style="right:541.0px;top:116.12px;text-align:right"><span style="letter-spacing:0.45px">8</span><span style="letter-spacing:0.45px">7</span><span style="letter-spacing:0.45px">2</span><span style="letter-spacing:0.45px">0</span>.<span style="letter-spacing:0.45px">0</span><span style="letter-spacing:0.45px">0</span> KB</div>
<div class="t" style="left:703px;top:116.12px">InnoDB</div>
<div class="t" style="left:786px;top:116.12px;font-size:12.5px;letter-spacing:0.4px">2023-02-23 12:43:58</div>
<div class="t" style="left:928.3px;top:116.12px;font-size:12.5px;letter-spacing:0.25px">2023-02-28 15...</div>
<div class="t" style="left:1035.6px;top:116.12px;letter-spacing:0.45px">utf8mb...</div>
<div class="t" style="left:1099.5px;top:116.12px">系统异常日志</div>
<svg class="ab" style="left:317px;top:137.68px" width="16" height="17" viewBox="0 0 16 17"><defs><clipPath id="tc3"><rect x="0" y="0" width="16" height="16.3" rx="3"/></clipPath></defs><g clip-path="url(#tc3)"><rect x="0" y="0" width="16" height="4.2" fill="#0b78d6"/><rect x="0" y="4.2" width="6.3" height="4.999999999999999" fill="#eaf4fd"/><rect x="5.3" y="4.2" width="6.3999999999999995" height="4.999999999999999" fill="#c6e2fa"/><rect x="10.7" y="4.2" width="6.300000000000001" height="4.999999999999999" fill="#a2d1f7"/><rect x="0" y="8.2" width="6.3" height="5.0" fill="#c2e0f9"/><rect x="5.3" y="8.2" width="6.3999999999999995" height="5.0" fill="#a2d0f8"/><rect x="10.7" y="8.2" width="6.300000000000001" height="5.0" fill="#70baf6"/><rect x="0" y="12.2" width="6.3" height="5.100000000000001" fill="#a0cff7"/><rect x="5.3" y="12.2" width="6.3999999999999995" height="5.100000000000001" fill="#6eb9f4"/><rect x="10.7" y="12.2" width="6.300000000000001" height="5.100000000000001" fill="#47aaf6"/></g></svg>
<div class="t" style="left:340.8px;top:134.91px;letter-spacing:0.12px">infra_codegen_column</div>
<div class="t" style="right:646.0px;top:134.91px;text-align:right"><span style="letter-spacing:-1.1px">1</span><span style="letter-spacing:0.45px">3</span><span style="letter-spacing:0.45px">4</span></div>
<div class="t" style="right:541.0px;top:134.91px;text-align:right"><span style="letter-spacing:0.45px">4</span><span style="letter-spacing:0.45px">8</span>.<span style="letter-spacing:0.45px">0</span><span style="letter-spacing:0.45px">0</span> KB</div>
<div class="t" style="left:703px;top:134.91px">InnoDB</div>
<div class="t" style="left:786px;top:134.91px;font-size:12.5px;letter-spacing:0.4px">2023-02-23 12:43:58</div>
<div class="t" style="left:1035.6px;top:134.91px;letter-spacing:0.45px">utf8mb...</div>
<div class="t" style="left:1099.5px;top:134.91px">代码生成表字段定义</div>
<svg class="ab" style="left:317px;top:156.47px" width="16" height="17" viewBox="0 0 16 17"><defs><clipPath id="tc4"><rect x="0" y="0" width="16" height="16.3" rx="3"/></clipPath></defs><g clip-path="url(#tc4)"><rect x="0" y="0" width="16" height="4.2" fill="#0b78d6"/><rect x="0" y="4.2" width="6.3" height="4.999999999999999" fill="#eaf4fd"/><rect x="5.3" y="4.2" width="6.3999999999999995" height="4.999999999999999" fill="#c6e2fa"/><rect x="10.7" y="4.2" width="6.300000000000001" height="4.999999999999999" fill="#a2d1f7"/><rect x="0" y="8.2" width="6.3" height="5.0" fill="#c2e0f9"/><rect x="5.3" y="8.2" width="6.3999999999999995" height="5.0" fill="#a2d0f8"/><rect x="10.7" y="8.2" width="6.300000000000001" height="5.0" fill="#70baf6"/><rect x="0" y="12.2" width="6.3" height="5.100000000000001" fill="#a0cff7"/><rect x="5.3" y="12.2" width="6.3999999999999995" height="5.100000000000001" fill="#6eb9f4"/><rect x="10.7" y="12.2" width="6.300000000000001" height="5.100000000000001" fill="#47aaf6"/></g></svg>
<div class="t" style="left:340.8px;top:153.70px;letter-spacing:0.12px">infra_codegen_table</div>
<div class="t" style="right:646.0px;top:153.70px;text-align:right"><span style="letter-spacing:0.45px">9</span></div>
<div class="t" style="right:541.0px;top:153.70px;text-align:right"><span style="letter-spacing:-1.1px">1</span><span style="letter-spacing:0.45px">6</span>.<span style="letter-spacing:0.45px">0</span><span style="letter-spacing:0.45px">0</span> KB</div>
<div class="t" style="left:703px;top:153.70px">InnoDB</div>
<div class="t" style="left:786px;top:153.70px;font-size:12.5px;letter-spacing:0.4px">2023-02-23 12:43:58</div>
<div class="t" style="left:1035.6px;top:153.70px;letter-spacing:0.45px">utf8mb...</div>
<div class="t" style="left:1099.5px;top:153.70px">代码生成表定义</div>
<svg class="ab" style="left:317px;top:175.26px" width="16" height="17" viewBox="0 0 16 17"><defs><clipPath id="tc5"><rect x="0" y="0" width="16" height="16.3" rx="3"/></clipPath></defs><g clip-path="url(#tc5)"><rect x="0" y="0" width="16" height="4.2" fill="#0b78d6"/><rect x="0" y="4.2" width="6.3" height="4.999999999999999" fill="#eaf4fd"/><rect x="5.3" y="4.2" width="6.3999999999999995" height="4.999999999999999" fill="#c6e2fa"/><rect x="10.7" y="4.2" width="6.300000000000001" height="4.999999999999999" fill="#a2d1f7"/><rect x="0" y="8.2" width="6.3" height="5.0" fill="#c2e0f9"/><rect x="5.3" y="8.2" width="6.3999999999999995" height="5.0" fill="#a2d0f8"/><rect x="10.7" y="8.2" width="6.300000000000001" height="5.0" fill="#70baf6"/><rect x="0" y="12.2" width="6.3" height="5.100000000000001" fill="#a0cff7"/><rect x="5.3" y="12.2" width="6.3999999999999995" height="5.100000000000001" fill="#6eb9f4"/><rect x="10.7" y="12.2" width="6.300000000000001" height="5.100000000000001" fill="#47aaf6"/></g></svg>
<div class="t" style="left:340.8px;top:172.49px;letter-spacing:0.12px">infra_config</div>
<div class="t" style="right:646.0px;top:172.49px;text-align:right"><span style="letter-spacing:0.45px">6</span></div>
<div class="t" style="right:541.0px;top:172.49px;text-align:right"><span style="letter-spacing:-1.1px">1</span><span style="letter-spacing:0.45px">6</span>.<span style="letter-spacing:0.45px">0</span><span style="letter-spacing:0.45px">0</span> KB</div>
<div class="t" style="left:703px;top:172.49px">InnoDB</div>
<div class="t" style="left:786px;top:172.49px;font-size:12.5px;letter-spacing:0.4px">2023-02-23 12:43:59</div>
<div class="t" style="left:1035.6px;top:172.49px;letter-spacing:0.45px">utf8mb...</div>
<div class="t" style="left:1099.5px;top:172.49px">参数配置表</div>
<svg class="ab" style="left:317px;top:194.04999999999998px" width="16" height="17" viewBox="0 0 16 17"><defs><clipPath id="tc6"><rect x="0" y="0" width="16" height="16.3" rx="3"/></clipPath></defs><g clip-path="url(#tc6)"><rect x="0" y="0" width="16" height="4.2" fill="#0b78d6"/><rect x="0" y="4.2" width="6.3" height="4.999999999999999" fill="#eaf4fd"/><rect x="5.3" y="4.2" width="6.3999999999999995" height="4.999999999999999" fill="#c6e2fa"/><rect x="10.7" y="4.2" width="6.300000000000001" height="4.999999999999999" fill="#a2d1f7"/><rect x="0" y="8.2" width="6.3" height="5.0" fill="#c2e0f9"/><rect x="5.3" y="8.2" width="6.3999999999999995" height="5.0" fill="#a2d0f8"/><rect x="10.7" y="8.2" width="6.300000000000001" height="5.0" fill="#70baf6"/><rect x="0" y="12.2" width="6.3" height="5.100000000000001" fill="#a0cff7"/><rect x="5.3" y="12.2" width="6.3999999999999995" height="5.100000000000001" fill="#6eb9f4"/><rect x="10.7" y="12.2" width="6.300000000000001" height="5.100000000000001" fill="#47aaf6"/></g></svg>
<div class="t" style="left:340.8px;top:191.28px;letter-spacing:0.12px">infra_data_source_config</div>
<div class="t" style="right:646.0px;top:191.28px;text-align:right"><span style="letter-spacing:0.45px">2</span></div>
<div class="t" style="right:541.0px;top:191.28px;text-align:right"><span style="letter-spacing:-1.1px">1</span><span style="letter-spacing:0.45px">6</span>.<span style="letter-spacing:0.45px">0</span><span style="letter-spacing:0.45px">0</span> KB</div>
<div class="t" style="left:703px;top:191.28px">InnoDB</div>
<div class="t" style="left:786px;top:191.28px;font-size:12.5px;letter-spacing:0.4px">2023-02-23 12:43:59</div>
<div class="t" style="left:928.3px;top:191.28px;font-size:12.5px;letter-spacing:0.25px">2023-02-27 14:...</div>
<div class="t" style="left:1035.6px;top:191.28px;letter-spacing:0.45px">utf8mb...</div>
<div class="t" style="left:1099.5px;top:191.28px">数据源配置表</div>
<svg class="ab" style="left:317px;top:212.83999999999997px" width="16" height="17" viewBox="0 0 16 17"><defs><clipPath id="tc7"><rect x="0" y="0" width="16" height="16.3" rx="3"/></clipPath></defs><g clip-path="url(#tc7)"><rect x="0" y="0" width="16" height="4.2" fill="#0b78d6"/><rect x="0" y="4.2" width="6.3" height="4.999999999999999" fill="#eaf4fd"/><rect x="5.3" y="4.2" width="6.3999999999999995" height="4.999999999999999" fill="#c6e2fa"/><rect x="10.7" y="4.2" width="6.300000000000001" height="4.999999999999999" fill="#a2d1f7"/><rect x="0" y="8.2" width="6.3" height="5.0" fill="#c2e0f9"/><rect x="5.3" y="8.2" width="6.3999999999999995" height="5.0" fill="#a2d0f8"/><rect x="10.7" y="8.2" width="6.300000000000001" height="5.0" fill="#70baf6"/><rect x="0" y="12.2" width="6.3" height="5.100000000000001" fill="#a0cff7"/><rect x="5.3" y="12.2" width="6.3999999999999995" height="5.100000000000001" fill="#6eb9f4"/><rect x="10.7" y="12.2" width="6.300000000000001" height="5.100000000000001" fill="#47aaf6"/></g></svg>
<div class="t" style="left:340.8px;top:210.07px;letter-spacing:0.12px">infra_file</div>
<div class="t" style="right:646.0px;top:210.07px;text-align:right"><span style="letter-spacing:0.45px">8</span><span style="letter-spacing:0.45px">2</span><span style="letter-spacing:0.45px">4</span></div>
<div class="t" style="right:541.0px;top:210.07px;text-align:right"><span style="letter-spacing:0.45px">2</span><span style="letter-spacing:0.45px">7</span><span style="letter-spacing:0.45px">2</span>.<span style="letter-spacing:0.45px">0</span><span style="letter-spacing:0.45px">0</span> KB</div>
<div class="t" style="left:703px;top:210.07px">InnoDB</div>
<div class="t" style="left:786px;top:210.07px;font-size:12.5px;letter-spacing:0.4px">2023-02-23 12:43:59</div>
<div class="t" style="left:1035.6px;top:210.07px;letter-spacing:0.45px">utf8mb...</div>
<div class="t" style="left:1099.5px;top:210.07px">文件表</div>
<svg class="ab" style="left:317px;top:231.63px" width="16" height="17" viewBox="0 0 16 17"><defs><clipPath id="tc8"><rect x="0" y="0" width="16" height="16.3" rx="3"/></clipPath></defs><g clip-path="url(#tc8)"><rect x="0" y="0" width="16" height="4.2" fill="#0b78d6"/><rect x="0" y="4.2" width="6.3" height="4.999999999999999" fill="#eaf4fd"/><rect x="5.3" y="4.2" width="6.3999999999999995" height="4.999999999999999" fill="#c6e2fa"/><rect x="10.7" y="4.2" width="6.300000000000001" height="4.999999999999999" fill="#a2d1f7"/><rect x="0" y="8.2" width="6.3" height="5.0" fill="#c2e0f9"/><rect x="5.3" y="8.2" width="6.3999999999999995" height="5.0" fill="#a2d0f8"/><rect x="10.7" y="8.2" width="6.300000000000001" height="5.0" fill="#70baf6"/><rect x="0" y="12.2" width="6.3" height="5.100000000000001" fill="#a0cff7"/><rect x="5.3" y="12.2" width="6.3999999999999995" height="5.100000000000001" fill="#6eb9f4"/><rect x="10.7" y="12.2" width="6.300000000000001" height="5.100000000000001" fill="#47aaf6"/></g></svg>
<div class="t" style="left:340.8px;top:228.86px;letter-spacing:0.12px">infra_file_config</div>
<div class="t" style="right:646.0px;top:228.86px;text-align:right"><span style="letter-spacing:0.45px">6</span></div>
<div class="t" style="right:541.0px;top:228.86px;text-align:right"><span style="letter-spacing:-1.1px">1</span><span style="letter-spacing:0.45px">6</span>.<span style="letter-spacing:0.45px">0</span><span style="letter-spacing:0.45px">0</span> KB</div>
<div class="t" style="left:703px;top:228.86px">InnoDB</div>
<div class="t" style="left:786px;top:228.86px;font-size:12.5px;letter-spacing:0.4px">2023-02-23 12:43:59</div>
<div class="t" style="left:1035.6px;top:228.86px;letter-spacing:0.45px">utf8mb...</div>
<div class="t" style="left:1099.5px;top:228.86px">文件配置表</div>
<svg class="ab" style="left:317px;top:250.42px" width="16" height="17" viewBox="0 0 16 17"><defs><clipPath id="tc9"><rect x="0" y="0" width="16" height="16.3" rx="3"/></clipPath></defs><g clip-path="url(#tc9)"><rect x="0" y="0" width="16" height="4.2" fill="#0b78d6"/><rect x="0" y="4.2" width="6.3" height="4.999999999999999" fill="#eaf4fd"/><rect x="5.3" y="4.2" width="6.3999999999999995" height="4.999999999999999" fill="#c6e2fa"/><rect x="10.7" y="4.2" width="6.300000000000001" height="4.999999999999999" fill="#a2d1f7"/><rect x="0" y="8.2" width="6.3" height="5.0" fill="#c2e0f9"/><rect x="5.3" y="8.2" width="6.3999999999999995" height="5.0" fill="#a2d0f8"/><rect x="10.7" y="8.2" width="6.300000000000001" height="5.0" fill="#70baf6"/><rect x="0" y="12.2" width="6.3" height="5.100000000000001" fill="#a0cff7"/><rect x="5.3" y="12.2" width="6.3999999999999995" height="5.100000000000001" fill="#6eb9f4"/><rect x="10.7" y="12.2" width="6.300000000000001" height="5.100000000000001" fill="#47aaf6"/></g></svg>
<div class="t" style="left:340.8px;top:247.65px;letter-spacing:0.12px">infra_file_content</div>
<div class="t" style="right:646.0px;top:247.65px;text-align:right"><span style="letter-spacing:0.45px">0</span></div>
<div class="t" style="right:541.0px;top:247.65px;text-align:right"><span style="letter-spacing:-1.1px">1</span><span style="letter-spacing:0.45px">6</span>.<span style="letter-spacing:0.45px">0</span><span style="letter-spacing:0.45px">0</span> KB</div>
<div class="t" style="left:703px;top:247.65px">InnoDB</div>
<div class="t" style="left:786px;top:247.65px;font-size:12.5px;letter-spacing:0.4px">2023-02-23 12:43:59</div>
<div class="t" style="left:1035.6px;top:247.65px;letter-spacing:0.45px">utf8mb...</div>
<div class="t" style="left:1099.5px;top:247.65px">文件表</div>
<svg class="ab" style="left:317px;top:269.21px" width="16" height="17" viewBox="0 0 16 17"><defs><clipPath id="tc10"><rect x="0" y="0" width="16" height="16.3" rx="3"/></clipPath></defs><g clip-path="url(#tc10)"><rect x="0" y="0" width="16" height="4.2" fill="#0b78d6"/><rect x="0" y="4.2" width="6.3" height="4.999999999999999" fill="#eaf4fd"/><rect x="5.3" y="4.2" width="6.3999999999999995" height="4.999999999999999" fill="#c6e2fa"/><rect x="10.7" y="4.2" width="6.300000000000001" height="4.999999999999999" fill="#a2d1f7"/><rect x="0" y="8.2" width="6.3" height="5.0" fill="#c2e0f9"/><rect x="5.3" y="8.2" width="6.3999999999999995" height="5.0" fill="#a2d0f8"/><rect x="10.7" y="8.2" width="6.300000000000001" height="5.0" fill="#70baf6"/><rect x="0" y="12.2" width="6.3" height="5.100000000000001" fill="#a0cff7"/><rect x="5.3" y="12.2" width="6.3999999999999995" height="5.100000000000001" fill="#6eb9f4"/><rect x="10.7" y="12.2" width="6.300000000000001" height="5.100000000000001" fill="#47aaf6"/></g></svg>
<div class="t" style="left:340.8px;top:266.44px;letter-spacing:0.12px">infra_job</div>
<div class="t" style="right:646.0px;top:266.44px;text-align:right"><span style="letter-spacing:0.45px">2</span></div>
<div class="t" style="right:541.0px;top:266.44px;text-align:right"><span style="letter-spacing:-1.1px">1</span><span style="letter-spacing:0.45px">6</span>.<span style="letter-spacing:0.45px">0</span><span style="letter-spacing:0.45px">0</span> KB</div>
<div class="t" style="left:703px;top:266.44px">InnoDB</div>
<div class="t" style="left:786px;top:266.44px;font-size:12.5px;letter-spacing:0.4px">2023-02-23 12:43:59</div>
<div class="t" style="left:1035.6px;top:266.44px;letter-spacing:0.45px">utf8mb...</div>
<div class="t" style="left:1099.5px;top:266.44px">定时任务表</div>
<svg class="ab" style="left:317px;top:288.0px" width="16" height="17" viewBox="0 0 16 17"><defs><clipPath id="tc11"><rect x="0" y="0" width="16" height="16.3" rx="3"/></clipPath></defs><g clip-path="url(#tc11)"><rect x="0" y="0" width="16" height="4.2" fill="#0b78d6"/><rect x="0" y="4.2" width="6.3" height="4.999999999999999" fill="#eaf4fd"/><rect x="5.3" y="4.2" width="6.3999999999999995" height="4.999999999999999" fill="#c6e2fa"/><rect x="10.7" y="4.2" width="6.300000000000001" height="4.999999999999999" fill="#a2d1f7"/><rect x="0" y="8.2" width="6.3" height="5.0" fill="#c2e0f9"/><rect x="5.3" y="8.2" width="6.3999999999999995" height="5.0" fill="#a2d0f8"/><rect x="10.7" y="8.2" width="6.300000000000001" height="5.0" fill="#70baf6"/><rect x="0" y="12.2" width="6.3" height="5.100000000000001" fill="#a0cff7"/><rect x="5.3" y="12.2" width="6.3999999999999995" height="5.100000000000001" fill="#6eb9f4"/><rect x="10.7" y="12.2" width="6.300000000000001" height="5.100000000000001" fill="#47aaf6"/></g></svg>
<div class="t" style="left:340.8px;top:285.23px;letter-spacing:0.12px">infra_job_log</div>
<div class="t" style="right:646.0px;top:285.23px;text-align:right"><span style="letter-spacing:-1.1px">1</span><span style="letter-spacing:0.45px">0</span><span style="letter-spacing:0.45px">6</span>,<span style="letter-spacing:-1.1px">1</span>...</div>
<div class="t" style="right:541.0px;top:285.23px;text-align:right"><span style="letter-spacing:0.45px">3</span><span style="letter-spacing:0.45px">6</span><span style="letter-spacing:0.45px">4</span><span style="letter-spacing:0.45px">3</span><span style="letter-spacing:0.45px">2</span>.<span style="letter-spacing:0.45px">0</span><span style="letter-spacing:0.45px">0</span> KB</div>
<div class="t" style="left:703px;top:285.23px">InnoDB</div>
<div class="t" style="left:786px;top:285.23px;font-size:12.5px;letter-spacing:0.4px">2023-02-23 12:43:59</div>
<div class="t" style="left:1035.6px;top:285.23px;letter-spacing:0.45px">utf8mb...</div>
<div class="t" style="left:1099.5px;top:285.23px">定时任务日志表</div>
<svg class="ab" style="left:317px;top:306.78999999999996px" width="16" height="17" viewBox="0 0 16 17"><defs><clipPath id="tc12"><rect x="0" y="0" width="16" height="16.3" rx="3"/></clipPath></defs><g clip-path="url(#tc12)"><rect x="0" y="0" width="16" height="4.2" fill="#0b78d6"/><rect x="0" y="4.2" width="6.3" height="4.999999999999999" fill="#eaf4fd"/><rect x="5.3" y="4.2" width="6.3999999999999995" height="4.999999999999999" fill="#c6e2fa"/><rect x="10.7" y="4.2" width="6.300000000000001" height="4.999999999999999" fill="#a2d1f7"/><rect x="0" y="8.2" width="6.3" height="5.0" fill="#c2e0f9"/><rect x="5.3" y="8.2" width="6.3999999999999995" height="5.0" fill="#a2d0f8"/><rect x="10.7" y="8.2" width="6.300000000000001" height="5.0" fill="#70baf6"/><rect x="0" y="12.2" width="6.3" height="5.100000000000001" fill="#a0cff7"/><rect x="5.3" y="12.2" width="6.3999999999999995" height="5.100000000000001" fill="#6eb9f4"/><rect x="10.7" y="12.2" width="6.300000000000001" height="5.100000000000001" fill="#47aaf6"/></g></svg>
<div class="t" style="left:340.8px;top:304.02px;letter-spacing:0.12px">infra_test_demo</div>
<div class="t" style="right:646.0px;top:304.02px;text-align:right"><span style="letter-spacing:0.45px">0</span></div>
<div class="t" style="right:541.0px;top:304.02px;text-align:right"><span style="letter-spacing:-1.1px">1</span><span style="letter-spacing:0.45px">6</span>.<span style="letter-spacing:0.45px">0</span><span style="letter-spacing:0.45px">0</span> KB</div>
<div class="t" style="left:703px;top:304.02px">InnoDB</div>
<div class="t" style="left:786px;top:304.02px;font-size:12.5px;letter-spacing:0.4px">2023-02-23 12:44:03</div>
<div class="t" style="left:1035.6px;top:304.02px;letter-spacing:0.45px">utf8mb...</div>
<div class="t" style="left:1099.5px;top:304.02px">字典类型表</div>
<svg class="ab" style="left:317px;top:325.58px" width="16" height="17" viewBox="0 0 16 17"><defs><clipPath id="tc13"><rect x="0" y="0" width="16" height="16.3" rx="3"/></clipPath></defs><g clip-path="url(#tc13)"><rect x="0" y="0" width="16" height="4.2" fill="#0b78d6"/><rect x="0" y="4.2" width="6.3" height="4.999999999999999" fill="#eaf4fd"/><rect x="5.3" y="4.2" width="6.3999999999999995" height="4.999999999999999" fill="#c6e2fa"/><rect x="10.7" y="4.2" width="6.300000000000001" height="4.999999999999999" fill="#a2d1f7"/><rect x="0" y="8.2" width="6.3" height="5.0" fill="#c2e0f9"/><rect x="5.3" y="8.2" width="6.3999999999999995" height="5.0" fill="#a2d0f8"/><rect x="10.7" y="8.2" width="6.300000000000001" height="5.0" fill="#70baf6"/><rect x="0" y="12.2" width="6.3" height="5.100000000000001" fill="#a0cff7"/><rect x="5.3" y="12.2" width="6.3999999999999995" height="5.100000000000001" fill="#6eb9f4"/><rect x="10.7" y="12.2" width="6.300000000000001" height="5.100000000000001" fill="#47aaf6"/></g></svg>
<div class="t" style="left:340.8px;top:322.81px;letter-spacing:0.12px">system_dict_data</div>
<div class="t" style="right:646.0px;top:322.81px;text-align:right"><span style="letter-spacing:0.45px">2</span><span style="letter-spacing:0.45px">0</span><span style="letter-spacing:0.45px">4</span></div>
<div class="t" style="right:541.0px;top:322.81px;text-align:right"><span style="letter-spacing:0.45px">6</span><span style="letter-spacing:0.45px">4</span>.<span style="letter-spacing:0.45px">0</span><span style="letter-spacing:0.45px">0</span> KB</div>
<div class="t" style="left:703px;top:322.81px">InnoDB</div>
<div class="t" style="left:786px;top:322.81px;font-size:12.5px;letter-spacing:0.4px">2023-02-23 12:45:45</div>
<div class="t" style="left:1035.6px;top:322.81px;letter-spacing:0.45px">utf8mb...</div>
<div class="t" style="left:1099.5px;top:322.81px">字典数据表</div>
<svg class="ab" style="left:317px;top:344.37px" width="16" height="17" viewBox="0 0 16 17"><defs><clipPath id="tc14"><rect x="0" y="0" width="16" height="16.3" rx="3"/></clipPath></defs><g clip-path="url(#tc14)"><rect x="0" y="0" width="16" height="4.2" fill="#0b78d6"/><rect x="0" y="4.2" width="6.3" height="4.999999999999999" fill="#eaf4fd"/><rect x="5.3" y="4.2" width="6.3999999999999995" height="4.999999999999999" fill="#c6e2fa"/><rect x="10.7" y="4.2" width="6.300000000000001" height="4.999999999999999" fill="#a2d1f7"/><rect x="0" y="8.2" width="6.3" height="5.0" fill="#c2e0f9"/><rect x="5.3" y="8.2" width="6.3999999999999995" height="5.0" fill="#a2d0f8"/><rect x="10.7" y="8.2" width="6.300000000000001" height="5.0" fill="#70baf6"/><rect x="0" y="12.2" width="6.3" height="5.100000000000001" fill="#a0cff7"/><rect x="5.3" y="12.2" width="6.3999999999999995" height="5.100000000000001" fill="#6eb9f4"/><rect x="10.7" y="12.2" width="6.300000000000001" height="5.100000000000001" fill="#47aaf6"/></g></svg>
<div class="t" style="left:340.8px;top:341.60px;letter-spacing:0.12px">system_dict_type</div>
<div class="t" style="right:646.0px;top:341.60px;text-align:right"><span style="letter-spacing:0.45px">6</span><span style="letter-spacing:0.45px">0</span></div>
<div class="t" style="right:541.0px;top:341.60px;text-align:right"><span style="letter-spacing:-1.1px">1</span><span style="letter-spacing:0.45px">6</span>.<span style="letter-spacing:0.45px">0</span><span style="letter-spacing:0.45px">0</span> KB</div>
<div class="t" style="left:703px;top:341.60px">InnoDB</div>
<div class="t" style="left:786px;top:341.60px;font-size:12.5px;letter-spacing:0.4px">2023-02-23 12:45:45</div>
<div class="t" style="left:1035.6px;top:341.60px;letter-spacing:0.45px">utf8mb...</div>
<div class="t" style="left:1099.5px;top:341.60px">字典类型表</div>
<svg class="ab" style="left:317px;top:363.15999999999997px" width="16" height="17" viewBox="0 0 16 17"><defs><clipPath id="tc15"><rect x="0" y="0" width="16" height="16.3" rx="3"/></clipPath></defs><g clip-path="url(#tc15)"><rect x="0" y="0" width="16" height="4.2" fill="#0b78d6"/><rect x="0" y="4.2" width="6.3" height="4.999999999999999" fill="#eaf4fd"/><rect x="5.3" y="4.2" width="6.3999999999999995" height="4.999999999999999" fill="#c6e2fa"/><rect x="10.7" y="4.2" width="6.300000000000001" height="4.999999999999999" fill="#a2d1f7"/><rect x="0" y="8.2" width="6.3" height="5.0" fill="#c2e0f9"/><rect x="5.3" y="8.2" width="6.3999999999999995" height="5.0" fill="#a2d0f8"/><rect x="10.7" y="8.2" width="6.300000000000001" height="5.0" fill="#70baf6"/><rect x="0" y="12.2" width="6.3" height="5.100000000000001" fill="#a0cff7"/><rect x="5.3" y="12.2" width="6.3999999999999995" height="5.100000000000001" fill="#6eb9f4"/><rect x="10.7" y="12.2" width="6.300000000000001" height="5.100000000000001" fill="#47aaf6"/></g></svg>
<div class="t" style="left:340.8px;top:360.39px;letter-spacing:0.12px">system_error_code</div>
<div class="t" style="right:646.0px;top:360.39px;text-align:right"><span style="letter-spacing:-1.1px">1</span><span style="letter-spacing:0.45px">8</span><span style="letter-spacing:0.45px">9</span></div>
<div class="t" style="right:541.0px;top:360.39px;text-align:right"><span style="letter-spacing:0.45px">4</span><span style="letter-spacing:0.45px">8</span>.<span style="letter-spacing:0.45px">0</span><span style="letter-spacing:0.45px">0</span> KB</div>
<div class="t" style="left:703px;top:360.39px">InnoDB</div>
<div class="t" style="left:786px;top:360.39px;font-size:12.5px;letter-spacing:0.4px">2023-02-23 12:45:45</div>
<div class="t" style="left:1035.6px;top:360.39px;letter-spacing:0.45px">utf8mb...</div>
<div class="t" style="left:1099.5px;top:360.39px">错误码表</div>
<svg class="ab" style="left:317px;top:381.94999999999993px" width="16" height="17" viewBox="0 0 16 17"><defs><clipPath id="tc16"><rect x="0" y="0" width="16" height="16.3" rx="3"/></clipPath></defs><g clip-path="url(#tc16)"><rect x="0" y="0" width="16" height="4.2" fill="#0b78d6"/><rect x="0" y="4.2" width="6.3" height="4.999999999999999" fill="#eaf4fd"/><rect x="5.3" y="4.2" width="6.3999999999999995" height="4.999999999999999" fill="#c6e2fa"/><rect x="10.7" y="4.2" width="6.300000000000001" height="4.999999999999999" fill="#a2d1f7"/><rect x="0" y="8.2" width="6.3" height="5.0" fill="#c2e0f9"/><rect x="5.3" y="8.2" width="6.3999999999999995" height="5.0" fill="#a2d0f8"/><rect x="10.7" y="8.2" width="6.300000000000001" height="5.0" fill="#70baf6"/><rect x="0" y="12.2" width="6.3" height="5.100000000000001" fill="#a0cff7"/><rect x="5.3" y="12.2" width="6.3999999999999995" height="5.100000000000001" fill="#6eb9f4"/><rect x="10.7" y="12.2" width="6.300000000000001" height="5.100000000000001" fill="#47aaf6"/></g></svg>
<div class="t" style="left:340.8px;top:379.18px;letter-spacing:0.12px">system_group</div>
<div class="t" style="right:646.0px;top:379.18px;text-align:right"><span style="letter-spacing:0.45px">2</span></div>
<div class="t" style="right:541.0px;top:379.18px;text-align:right"><span style="letter-spacing:-1.1px">1</span><span style="letter-spacing:0.45px">6</span>.<span style="letter-spacing:0.45px">0</span><span style="letter-spacing:0.45px">0</span> KB</div>
<div class="t" style="left:703px;top:379.18px">InnoDB</div>
<div class="t" style="left:786px;top:379.18px;font-size:12.5px;letter-spacing:0.4px">2023-02-23 12:45:45</div>
<div class="t" style="left:1035.6px;top:379.18px;letter-spacing:0.45px">utf8mb...</div>
<div class="t" style="left:1099.5px;top:379.18px">用户组</div>
<svg class="ab" style="left:317px;top:400.74px" width="16" height="17" viewBox="0 0 16 17"><defs><clipPath id="tc17"><rect x="0" y="0" width="16" height="16.3" rx="3"/></clipPath></defs><g clip-path="url(#tc17)"><rect x="0" y="0" width="16" height="4.2" fill="#0b78d6"/><rect x="0" y="4.2" width="6.3" height="4.999999999999999" fill="#eaf4fd"/><rect x="5.3" y="4.2" width="6.3999999999999995" height="4.999999999999999" fill="#c6e2fa"/><rect x="10.7" y="4.2" width="6.300000000000001" height="4.999999999999999" fill="#a2d1f7"/><rect x="0" y="8.2" width="6.3" height="5.0" fill="#c2e0f9"/><rect x="5.3" y="8.2" width="6.3999999999999995" height="5.0" fill="#a2d0f8"/><rect x="10.7" y="8.2" width="6.300000000000001" height="5.0" fill="#70baf6"/><rect x="0" y="12.2" width="6.3" height="5.100000000000001" fill="#a0cff7"/><rect x="5.3" y="12.2" width="6.3999999999999995" height="5.100000000000001" fill="#6eb9f4"/><rect x="10.7" y="12.2" width="6.300000000000001" height="5.100000000000001" fill="#47aaf6"/></g></svg>
<div class="t" style="left:340.8px;top:397.97px;letter-spacing:0.12px">system_mail_account</div>
<div class="t" style="right:646.0px;top:397.97px;text-align:right"><span style="letter-spacing:0.45px">3</span></div>
<div class="t" style="right:541.0px;top:397.97px;text-align:right"><span style="letter-spacing:-1.1px">1</span><span style="letter-spacing:0.45px">6</span>.<span style="letter-spacing:0.45px">0</span><span style="letter-spacing:0.45px">0</span> KB</div>
<div class="t" style="left:703px;top:397.97px">InnoDB</div>
<div class="t" style="left:786px;top:397.97px;font-size:12.5px;letter-spacing:0.4px">2023-02-23 12:45:45</div>
<div class="t" style="left:1035.6px;top:397.97px;letter-spacing:0.45px">utf8mb...</div>
<div class="t" style="left:1099.5px;top:397.97px">邮箱账号表</div>
<svg class="ab" style="left:317px;top:419.53px" width="16" height="17" viewBox="0 0 16 17"><defs><clipPath id="tc18"><rect x="0" y="0" width="16" height="16.3" rx="3"/></clipPath></defs><g clip-path="url(#tc18)"><rect x="0" y="0" width="16" height="4.2" fill="#0b78d6"/><rect x="0" y="4.2" width="6.3" height="4.999999999999999" fill="#eaf4fd"/><rect x="5.3" y="4.2" width="6.3999999999999995" height="4.999999999999999" fill="#c6e2fa"/><rect x="10.7" y="4.2" width="6.300000000000001" height="4.999999999999999" fill="#a2d1f7"/><rect x="0" y="8.2" width="6.3" height="5.0" fill="#c2e0f9"/><rect x="5.3" y="8.2" width="6.3999999999999995" height="5.0" fill="#a2d0f8"/><rect x="10.7" y="8.2" width="6.300000000000001" height="5.0" fill="#70baf6"/><rect x="0" y="12.2" width="6.3" height="5.100000000000001" fill="#a0cff7"/><rect x="5.3" y="12.2" width="6.3999999999999995" height="5.100000000000001" fill="#6eb9f4"/><rect x="10.7" y="12.2" width="6.300000000000001" height="5.100000000000001" fill="#47aaf6"/></g></svg>
<div class="t" style="left:340.8px;top:416.76px;letter-spacing:0.12px">system_mail_log</div>
<div class="t" style="right:646.0px;top:416.76px;text-align:right"><span style="letter-spacing:0.45px">7</span></div>
<div class="t" style="right:541.0px;top:416.76px;text-align:right"><span style="letter-spacing:-1.1px">1</span><span style="letter-spacing:0.45px">6</span>.<span style="letter-spacing:0.45px">0</span><span style="letter-spacing:0.45px">0</span> KB</div>
<div class="t" style="left:703px;top:416.76px">InnoDB</div>
<div class="t" style="left:786px;top:416.76px;font-size:12.5px;letter-spacing:0.4px">2023-02-23 12:45:45</div>
<div class="t" style="left:1035.6px;top:416.76px;letter-spacing:0.45px">utf8mb...</div>
<div class="t" style="left:1099.5px;top:416.76px">邮件日志表</div>
<svg class="ab" style="left:317px;top:438.31999999999994px" width="16" height="17" viewBox="0 0 16 17"><defs><clipPath id="tc19"><rect x="0" y="0" width="16" height="16.3" rx="3"/></clipPath></defs><g clip-path="url(#tc19)"><rect x="0" y="0" width="16" height="4.2" fill="#0b78d6"/><rect x="0" y="4.2" width="6.3" height="4.999999999999999" fill="#eaf4fd"/><rect x="5.3" y="4.2" width="6.3999999999999995" height="4.999999999999999" fill="#c6e2fa"/><rect x="10.7" y="4.2" width="6.300000000000001" height="4.999999999999999" fill="#a2d1f7"/><rect x="0" y="8.2" width="6.3" height="5.0" fill="#c2e0f9"/><rect x="5.3" y="8.2" width="6.3999999999999995" height="5.0" fill="#a2d0f8"/><rect x="10.7" y="8.2" width="6.300000000000001" height="5.0" fill="#70baf6"/><rect x="0" y="12.2" width="6.3" height="5.100000000000001" fill="#a0cff7"/><rect x="5.3" y="12.2" width="6.3999999999999995" height="5.100000000000001" fill="#6eb9f4"/><rect x="10.7" y="12.2" width="6.300000000000001" height="5.100000000000001" fill="#47aaf6"/></g></svg>
<div class="t" style="left:340.8px;top:435.55px;letter-spacing:0.12px">system_mail_template</div>
<div class="t" style="right:646.0px;top:435.55px;text-align:right"><span style="letter-spacing:0.45px">3</span></div>
<div class="t" style="right:541.0px;top:435.55px;text-align:right"><span style="letter-spacing:-1.1px">1</span><span style="letter-spacing:0.45px">6</span>.<span style="letter-spacing:0.45px">0</span><span style="letter-spacing:0.45px">0</span> KB</div>
<div class="t" style="left:703px;top:435.55px">InnoDB</div>
<div class="t" style="left:786px;top:435.55px;font-size:12.5px;letter-spacing:0.4px">2023-02-23 12:45:45</div>
<div class="t" style="left:1035.6px;top:435.55px;letter-spacing:0.45px">utf8mb...</div>
<div class="t" style="left:1099.5px;top:435.55px">邮件模版表</div>
<svg class="ab" style="left:317px;top:457.11px" width="16" height="17" viewBox="0 0 16 17"><defs><clipPath id="tc20"><rect x="0" y="0" width="16" height="16.3" rx="3"/></clipPath></defs><g clip-path="url(#tc20)"><rect x="0" y="0" width="16" height="4.2" fill="#0b78d6"/><rect x="0" y="4.2" width="6.3" height="4.999999999999999" fill="#eaf4fd"/><rect x="5.3" y="4.2" width="6.3999999999999995" height="4.999999999999999" fill="#c6e2fa"/><rect x="10.7" y="4.2" width="6.300000000000001" height="4.999999999999999" fill="#a2d1f7"/><rect x="0" y="8.2" width="6.3" height="5.0" fill="#c2e0f9"/><rect x="5.3" y="8.2" width="6.3999999999999995" height="5.0" fill="#a2d0f8"/><rect x="10.7" y="8.2" width="6.300000000000001" height="5.0" fill="#70baf6"/><rect x="0" y="12.2" width="6.3" height="5.100000000000001" fill="#a0cff7"/><rect x="5.3" y="12.2" width="6.3999999999999995" height="5.100000000000001" fill="#6eb9f4"/><rect x="10.7" y="12.2" width="6.300000000000001" height="5.100000000000001" fill="#47aaf6"/></g></svg>
<div class="t" style="left:340.8px;top:454.34px;letter-spacing:0.12px">system_menu</div>
<div class="t" style="right:646.0px;top:454.34px;text-align:right"><span style="letter-spacing:0.45px">3</span><span style="letter-spacing:0.45px">8</span><span style="letter-spacing:0.45px">6</span></div>
<div class="t" style="right:541.0px;top:454.34px;text-align:right"><span style="letter-spacing:0.45px">8</span><span style="letter-spacing:0.45px">0</span>.<span style="letter-spacing:0.45px">0</span><span style="letter-spacing:0.45px">0</span> KB</div>
<div class="t" style="left:703px;top:454.34px">InnoDB</div>
<div class="t" style="left:786px;top:454.34px;font-size:12.5px;letter-spacing:0.4px">2023-02-23 12:45:45</div>
<div class="t" style="left:928.3px;top:454.34px;font-size:12.5px;letter-spacing:0.25px">2023-02-27 16:...</div>
<div class="t" style="left:1035.6px;top:454.34px;letter-spacing:0.45px">utf8mb...</div>
<div class="t" style="left:1099.5px;top:454.34px">菜单权限表</div>
<svg class="ab" style="left:317px;top:475.9px" width="16" height="17" viewBox="0 0 16 17"><defs><clipPath id="tc21"><rect x="0" y="0" width="16" height="16.3" rx="3"/></clipPath></defs><g clip-path="url(#tc21)"><rect x="0" y="0" width="16" height="4.2" fill="#0b78d6"/><rect x="0" y="4.2" width="6.3" height="4.999999999999999" fill="#eaf4fd"/><rect x="5.3" y="4.2" width="6.3999999999999995" height="4.999999999999999" fill="#c6e2fa"/><rect x="10.7" y="4.2" width="6.300000000000001" height="4.999999999999999" fill="#a2d1f7"/><rect x="0" y="8.2" width="6.3" height="5.0" fill="#c2e0f9"/><rect x="5.3" y="8.2" width="6.3999999999999995" height="5.0" fill="#a2d0f8"/><rect x="10.7" y="8.2" width="6.300000000000001" height="5.0" fill="#70baf6"/><rect x="0" y="12.2" width="6.3" height="5.100000000000001" fill="#a0cff7"/><rect x="5.3" y="12.2" width="6.3999999999999995" height="5.100000000000001" fill="#6eb9f4"/><rect x="10.7" y="12.2" width="6.300000000000001" height="5.100000000000001" fill="#47aaf6"/></g></svg>
<div class="t" style="left:340.8px;top:473.13px;letter-spacing:0.12px">system_notify_template</div>
<div class="t" style="right:646.0px;top:473.13px;text-align:right"><span style="letter-spacing:0.45px">3</span></div>
<div class="t" style="right:541.0px;top:473.13px;text-align:right"><span style="letter-spacing:-1.1px">1</span><span style="letter-spacing:0.45px">6</span>.<span style="letter-spacing:0.45px">0</span><span style="letter-spacing:0.45px">0</span> KB</div>
<div class="t" style="left:703px;top:473.13px">InnoDB</div>
<div class="t" style="left:786px;top:473.13px;font-size:12.5px;letter-spacing:0.4px">2023-02-23 12:45:45</div>
<div class="t" style="left:1035.6px;top:473.13px;letter-spacing:0.45px">utf8mb...</div>
<div class="t" style="left:1099.5px;top:473.13px">站内信模板表</div>
<svg class="ab" style="left:317px;top:494.68999999999994px" width="16" height="17" viewBox="0 0 16 17"><defs><clipPath id="tc22"><rect x="0" y="0" width="16" height="16.3" rx="3"/></clipPath></defs><g clip-path="url(#tc22)"><rect x="0" y="0" width="16" height="4.2" fill="#0b78d6"/><rect x="0" y="4.2" width="6.3" height="4.999999999999999" fill="#eaf4fd"/><rect x="5.3" y="4.2" width="6.3999999999999995" height="4.999999999999999" fill="#c6e2fa"/><rect x="10.7" y="4.2" width="6.300000000000001" height="4.999999999999999" fill="#a2d1f7"/><rect x="0" y="8.2" width="6.3" height="5.0" fill="#c2e0f9"/><rect x="5.3" y="8.2" width="6.3999999999999995" height="5.0" fill="#a2d0f8"/><rect x="10.7" y="8.2" width="6.300000000000001" height="5.0" fill="#70baf6"/><rect x="0" y="12.2" width="6.3" height="5.100000000000001" fill="#a0cff7"/><rect x="5.3" y="12.2" width="6.3999999999999995" height="5.100000000000001" fill="#6eb9f4"/><rect x="10.7" y="12.2" width="6.300000000000001" height="5.100000000000001" fill="#47aaf6"/></g></svg>
<div class="t" style="left:340.8px;top:491.92px;letter-spacing:0.12px">system_oauth2_access_token</div>
<div class="t" style="right:646.0px;top:491.92px;text-align:right"><span style="letter-spacing:-1.1px">1</span>,<span style="letter-spacing:0.45px">5</span><span style="letter-spacing:0.45px">8</span><span style="letter-spacing:0.45px">2</span></div>
<div class="t" style="right:541.0px;top:491.92px;text-align:right"><span style="letter-spacing:0.45px">2</span><span style="letter-spacing:0.45px">5</span><span style="letter-spacing:0.45px">6</span>.<span style="letter-spacing:0.45px">0</span><span style="letter-spacing:0.45px">0</span> KB</div>
<div class="t" style="left:703px;top:491.92px">InnoDB</div>
<div class="t" style="left:786px;top:491.92px;font-size:12.5px;letter-spacing:0.4px">2023-02-23 12:45:46</div>
<div class="t" style="left:928.3px;top:491.92px;font-size:12.5px;letter-spacing:0.25px">2023-03-01 13:...</div>
<div class="t" style="left:1035.6px;top:491.92px;letter-spacing:0.45px">utf8mb...</div>
<div class="t" style="left:1099.5px;top:491.92px">OAuth2 访问令牌</div>
<svg class="ab" style="left:317px;top:513.48px" width="16" height="17" viewBox="0 0 16 17"><defs><clipPath id="tc23"><rect x="0" y="0" width="16" height="16.3" rx="3"/></clipPath></defs><g clip-path="url(#tc23)"><rect x="0" y="0" width="16" height="4.2" fill="#0b78d6"/><rect x="0" y="4.2" width="6.3" height="4.999999999999999" fill="#eaf4fd"/><rect x="5.3" y="4.2" width="6.3999999999999995" height="4.999999999999999" fill="#c6e2fa"/><rect x="10.7" y="4.2" width="6.300000000000001" height="4.999999999999999" fill="#a2d1f7"/><rect x="0" y="8.2" width="6.3" height="5.0" fill="#c2e0f9"/><rect x="5.3" y="8.2" width="6.3999999999999995" height="5.0" fill="#a2d0f8"/><rect x="10.7" y="8.2" width="6.300000000000001" height="5.0" fill="#70baf6"/><rect x="0" y="12.2" width="6.3" height="5.100000000000001" fill="#a0cff7"/><rect x="5.3" y="12.2" width="6.3999999999999995" height="5.100000000000001" fill="#6eb9f4"/><rect x="10.7" y="12.2" width="6.300000000000001" height="5.100000000000001" fill="#47aaf6"/></g></svg>
<div class="t" style="left:340.8px;top:510.71px;letter-spacing:0.12px">system_oauth2_approve</div>
<div class="t" style="right:646.0px;top:510.71px;text-align:right"><span style="letter-spacing:0.45px">4</span></div>
<div class="t" style="right:541.0px;top:510.71px;text-align:right"><span style="letter-spacing:-1.1px">1</span><span style="letter-spacing:0.45px">6</span>.<span style="letter-spacing:0.45px">0</span><span style="letter-spacing:0.45px">0</span> KB</div>
<div class="t" style="left:703px;top:510.71px">InnoDB</div>
<div class="t" style="left:786px;top:510.71px;font-size:12.5px;letter-spacing:0.4px">2023-02-23 12:45:46</div>
<div class="t" style="left:1035.6px;top:510.71px;letter-spacing:0.45px">utf8mb...</div>
<div class="t" style="left:1099.5px;top:510.71px">OAuth2 批准表</div>
<svg class="ab" style="left:317px;top:532.27px" width="16" height="17" viewBox="0 0 16 17"><defs><clipPath id="tc24"><rect x="0" y="0" width="16" height="16.3" rx="3"/></clipPath></defs><g clip-path="url(#tc24)"><rect x="0" y="0" width="16" height="4.2" fill="#0b78d6"/><rect x="0" y="4.2" width="6.3" height="4.999999999999999" fill="#eaf4fd"/><rect x="5.3" y="4.2" width="6.3999999999999995" height="4.999999999999999" fill="#c6e2fa"/><rect x="10.7" y="4.2" width="6.300000000000001" height="4.999999999999999" fill="#a2d1f7"/><rect x="0" y="8.2" width="6.3" height="5.0" fill="#c2e0f9"/><rect x="5.3" y="8.2" width="6.3999999999999995" height="5.0" fill="#a2d0f8"/><rect x="10.7" y="8.2" width="6.300000000000001" height="5.0" fill="#70baf6"/><rect x="0" y="12.2" width="6.3" height="5.100000000000001" fill="#a0cff7"/><rect x="5.3" y="12.2" width="6.3999999999999995" height="5.100000000000001" fill="#6eb9f4"/><rect x="10.7" y="12.2" width="6.300000000000001" height="5.100000000000001" fill="#47aaf6"/></g></svg>
<div class="t" style="left:340.8px;top:529.50px;letter-spacing:0.12px">system_oauth2_client</div>
<div class="t" style="right:646.0px;top:529.50px;text-align:right"><span style="letter-spacing:0.45px">4</span></div>
<div class="t" style="right:541.0px;top:529.50px;text-align:right"><span style="letter-spacing:-1.1px">1</span><span style="letter-spacing:0.45px">6</span>.<span style="letter-spacing:0.45px">0</span><span style="letter-spacing:0.45px">0</span> KB</div>
<div class="t" style="left:703px;top:529.50px">InnoDB</div>
<div class="t" style="left:786px;top:529.50px;font-size:12.5px;letter-spacing:0.4px">2023-02-23 12:45:46</div>
<div class="t" style="left:1035.6px;top:529.50px;letter-spacing:0.45px">utf8mb...</div>
<div class="t" style="left:1099.5px;top:529.50px">OAuth2 客户端表</div>
<svg class="ab" style="left:317px;top:551.06px" width="16" height="17" viewBox="0 0 16 17"><defs><clipPath id="tc25"><rect x="0" y="0" width="16" height="16.3" rx="3"/></clipPath></defs><g clip-path="url(#tc25)"><rect x="0" y="0" width="16" height="4.2" fill="#0b78d6"/><rect x="0" y="4.2" width="6.3" height="4.999999999999999" fill="#eaf4fd"/><rect x="5.3" y="4.2" width="6.3999999999999995" height="4.999999999999999" fill="#c6e2fa"/><rect x="10.7" y="4.2" width="6.300000000000001" height="4.999999999999999" fill="#a2d1f7"/><rect x="0" y="8.2" width="6.3" height="5.0" fill="#c2e0f9"/><rect x="5.3" y="8.2" width="6.3999999999999995" height="5.0" fill="#a2d0f8"/><rect x="10.7" y="8.2" width="6.300000000000001" height="5.0" fill="#70baf6"/><rect x="0" y="12.2" width="6.3" height="5.100000000000001" fill="#a0cff7"/><rect x="5.3" y="12.2" width="6.3999999999999995" height="5.100000000000001" fill="#6eb9f4"/><rect x="10.7" y="12.2" width="6.300000000000001" height="5.100000000000001" fill="#47aaf6"/></g></svg>
<div class="t" style="left:340.8px;top:548.29px;letter-spacing:0.12px">system_oauth2_code</div>
<div class="t" style="right:646.0px;top:548.29px;text-align:right"><span style="letter-spacing:-1.1px">1</span><span style="letter-spacing:0.45px">0</span><span style="letter-spacing:0.45px">6</span></div>
<div class="t" style="right:541.0px;top:548.29px;text-align:right"><span style="letter-spacing:0.45px">4</span><span style="letter-spacing:0.45px">8</span>.<span style="letter-spacing:0.45px">0</span><span style="letter-spacing:0.45px">0</span> KB</div>
<div class="t" style="left:703px;top:548.29px">InnoDB</div>
<div class="t" style="left:786px;top:548.29px;font-size:12.5px;letter-spacing:0.4px">2023-02-23 12:45:46</div>
<div class="t" style="left:1035.6px;top:548.29px;letter-spacing:0.45px">utf8mb...</div>
<div class="t" style="left:1099.5px;top:548.29px">OAuth2 授权码表</div>
<svg class="ab" style="left:317px;top:569.85px" width="16" height="17" viewBox="0 0 16 17"><defs><clipPath id="tc26"><rect x="0" y="0" width="16" height="16.3" rx="3"/></clipPath></defs><g clip-path="url(#tc26)"><rect x="0" y="0" width="16" height="4.2" fill="#0b78d6"/><rect x="0" y="4.2" width="6.3" height="4.999999999999999" fill="#eaf4fd"/><rect x="5.3" y="4.2" width="6.3999999999999995" height="4.999999999999999" fill="#c6e2fa"/><rect x="10.7" y="4.2" width="6.300000000000001" height="4.999999999999999" fill="#a2d1f7"/><rect x="0" y="8.2" width="6.3" height="5.0" fill="#c2e0f9"/><rect x="5.3" y="8.2" width="6.3999999999999995" height="5.0" fill="#a2d0f8"/><rect x="10.7" y="8.2" width="6.300000000000001" height="5.0" fill="#70baf6"/><rect x="0" y="12.2" width="6.3" height="5.100000000000001" fill="#a0cff7"/><rect x="5.3" y="12.2" width="6.3999999999999995" height="5.100000000000001" fill="#6eb9f4"/><rect x="10.7" y="12.2" width="6.300000000000001" height="5.100000000000001" fill="#47aaf6"/></g></svg>
<div class="t" style="left:340.8px;top:567.08px;letter-spacing:0.12px">system_oauth2_refresh_token</div>
<div class="t" style="right:646.0px;top:567.08px;text-align:right"><span style="letter-spacing:0.45px">6</span><span style="letter-spacing:0.45px">2</span><span style="letter-spacing:0.45px">8</span></div>
<div class="t" style="right:541.0px;top:567.08px;text-align:right"><span style="letter-spacing:0.45px">9</span><span style="letter-spacing:0.45px">6</span>.<span style="letter-spacing:0.45px">0</span><span style="letter-spacing:0.45px">0</span> KB</div>
<div class="t" style="left:703px;top:567.08px">InnoDB</div>
<div class="t" style="left:786px;top:567.08px;font-size:12.5px;letter-spacing:0.4px">2023-02-23 12:45:46</div>
<div class="t" style="left:928.3px;top:567.08px;font-size:12.5px;letter-spacing:0.25px">2023-03-01 03...</div>
<div class="t" style="left:1035.6px;top:567.08px;letter-spacing:0.45px">utf8mb...</div>
<div class="t" style="left:1099.5px;top:567.08px">OAuth2 刷新令牌</div>
<svg class="ab" style="left:317px;top:588.64px" width="16" height="17" viewBox="0 0 16 17"><defs><clipPath id="tc27"><rect x="0" y="0" width="16" height="16.3" rx="3"/></clipPath></defs><g clip-path="url(#tc27)"><rect x="0" y="0" width="16" height="4.2" fill="#0b78d6"/><rect x="0" y="4.2" width="6.3" height="4.999999999999999" fill="#eaf4fd"/><rect x="5.3" y="4.2" width="6.3999999999999995" height="4.999999999999999" fill="#c6e2fa"/><rect x="10.7" y="4.2" width="6.300000000000001" height="4.999999999999999" fill="#a2d1f7"/><rect x="0" y="8.2" width="6.3" height="5.0" fill="#c2e0f9"/><rect x="5.3" y="8.2" width="6.3999999999999995" height="5.0" fill="#a2d0f8"/><rect x="10.7" y="8.2" width="6.300000000000001" height="5.0" fill="#70baf6"/><rect x="0" y="12.2" width="6.3" height="5.100000000000001" fill="#a0cff7"/><rect x="5.3" y="12.2" width="6.3999999999999995" height="5.100000000000001" fill="#6eb9f4"/><rect x="10.7" y="12.2" width="6.300000000000001" height="5.100000000000001" fill="#47aaf6"/></g></svg>
<div class="t" style="left:340.8px;top:585.87px;letter-spacing:0.12px">system_sensitive_word</div>
<div class="t" style="right:646.0px;top:585.87px;text-align:right"><span style="letter-spacing:0.45px">3</span></div>
<div class="t" style="right:541.0px;top:585.87px;text-align:right"><span style="letter-spacing:-1.1px">1</span><span style="letter-spacing:0.45px">6</span>.<span style="letter-spacing:0.45px">0</span><span style="letter-spacing:0.45px">0</span> KB</div>
<div class="t" style="left:703px;top:585.87px">InnoDB</div>
<div class="t" style="left:786px;top:585.87px;font-size:12.5px;letter-spacing:0.4px">2023-02-23 12:45:47</div>
<div class="t" style="left:1035.6px;top:585.87px;letter-spacing:0.45px">utf8mb...</div>
<div class="t" style="left:1099.5px;top:585.87px">敏感词</div>
<svg class="ab" style="left:317px;top:607.43px" width="16" height="17" viewBox="0 0 16 17"><defs><clipPath id="tc28"><rect x="0" y="0" width="16" height="16.3" rx="3"/></clipPath></defs><g clip-path="url(#tc28)"><rect x="0" y="0" width="16" height="4.2" fill="#0b78d6"/><rect x="0" y="4.2" width="6.3" height="4.999999999999999" fill="#eaf4fd"/><rect x="5.3" y="4.2" width="6.3999999999999995" height="4.999999999999999" fill="#c6e2fa"/><rect x="10.7" y="4.2" width="6.300000000000001" height="4.999999999999999" fill="#a2d1f7"/><rect x="0" y="8.2" width="6.3" height="5.0" fill="#c2e0f9"/><rect x="5.3" y="8.2" width="6.3999999999999995" height="5.0" fill="#a2d0f8"/><rect x="10.7" y="8.2" width="6.300000000000001" height="5.0" fill="#70baf6"/><rect x="0" y="12.2" width="6.3" height="5.100000000000001" fill="#a0cff7"/><rect x="5.3" y="12.2" width="6.3999999999999995" height="5.100000000000001" fill="#6eb9f4"/><rect x="10.7" y="12.2" width="6.300000000000001" height="5.100000000000001" fill="#47aaf6"/></g></svg>
<div class="t" style="left:340.8px;top:604.66px;letter-spacing:0.12px">system_sms_channel</div>
<div class="t" style="right:646.0px;top:604.66px;text-align:right"><span style="letter-spacing:0.45px">3</span></div>
<div class="t" style="right:541.0px;top:604.66px;text-align:right"><span style="letter-spacing:-1.1px">1</span><span style="letter-spacing:0.45px">6</span>.<span style="letter-spacing:0.45px">0</span><span style="letter-spacing:0.45px">0</span> KB</div>
<div class="t" style="left:703px;top:604.66px">InnoDB</div>
<div class="t" style="left:786px;top:604.66px;font-size:12.5px;letter-spacing:0.4px">2023-02-23 12:45:47</div>
<div class="t" style="left:1035.6px;top:604.66px;letter-spacing:0.45px">utf8mb...</div>
<div class="t" style="left:1099.5px;top:604.66px">短信渠道</div>
<svg class="ab" style="left:317px;top:626.22px" width="16" height="17" viewBox="0 0 16 17"><defs><clipPath id="tc29"><rect x="0" y="0" width="16" height="16.3" rx="3"/></clipPath></defs><g clip-path="url(#tc29)"><rect x="0" y="0" width="16" height="4.2" fill="#0b78d6"/><rect x="0" y="4.2" width="6.3" height="4.999999999999999" fill="#eaf4fd"/><rect x="5.3" y="4.2" width="6.3999999999999995" height="4.999999999999999" fill="#c6e2fa"/><rect x="10.7" y="4.2" width="6.300000000000001" height="4.999999999999999" fill="#a2d1f7"/><rect x="0" y="8.2" width="6.3" height="5.0" fill="#c2e0f9"/><rect x="5.3" y="8.2" width="6.3999999999999995" height="5.0" fill="#a2d0f8"/><rect x="10.7" y="8.2" width="6.300000000000001" height="5.0" fill="#70baf6"/><rect x="0" y="12.2" width="6.3" height="5.100000000000001" fill="#a0cff7"/><rect x="5.3" y="12.2" width="6.3999999999999995" height="5.100000000000001" fill="#6eb9f4"/><rect x="10.7" y="12.2" width="6.300000000000001" height="5.100000000000001" fill="#47aaf6"/></g></svg>
<div class="t" style="left:340.8px;top:623.45px;letter-spacing:0.12px">system_sms_code</div>
<div class="t" style="right:646.0px;top:623.45px;text-align:right"><span style="letter-spacing:0.45px">5</span></div>
<div class="t" style="right:541.0px;top:623.45px;text-align:right"><span style="letter-spacing:-1.1px">1</span><span style="letter-spacing:0.45px">6</span>.<span style="letter-spacing:0.45px">0</span><span style="letter-spacing:0.45px">0</span> KB</div>
<div class="t" style="left:703px;top:623.45px">InnoDB</div>
<div class="t" style="left:786px;top:623.45px;font-size:12.5px;letter-spacing:0.4px">2023-02-23 12:45:47</div>
<div class="t" style="left:1035.6px;top:623.45px;letter-spacing:0.45px">utf8mb...</div>
<div class="t" style="left:1099.5px;top:623.45px">手机验证码</div>
<svg class="ab" style="left:317px;top:645.01px" width="16" height="17" viewBox="0 0 16 17"><defs><clipPath id="tc30"><rect x="0" y="0" width="16" height="16.3" rx="3"/></clipPath></defs><g clip-path="url(#tc30)"><rect x="0" y="0" width="16" height="4.2" fill="#0b78d6"/><rect x="0" y="4.2" width="6.3" height="4.999999999999999" fill="#eaf4fd"/><rect x="5.3" y="4.2" width="6.3999999999999995" height="4.999999999999999" fill="#c6e2fa"/><rect x="10.7" y="4.2" width="6.300000000000001" height="4.999999999999999" fill="#a2d1f7"/><rect x="0" y="8.2" width="6.3" height="5.0" fill="#c2e0f9"/><rect x="5.3" y="8.2" width="6.3999999999999995" height="5.0" fill="#a2d0f8"/><rect x="10.7" y="8.2" width="6.300000000000001" height="5.0" fill="#70baf6"/><rect x="0" y="12.2" width="6.3" height="5.100000000000001" fill="#a0cff7"/><rect x="5.3" y="12.2" width="6.3999999999999995" height="5.100000000000001" fill="#6eb9f4"/><rect x="10.7" y="12.2" width="6.300000000000001" height="5.100000000000001" fill="#47aaf6"/></g></svg>
<div class="t" style="left:340.8px;top:642.24px;letter-spacing:0.12px">system_sms_log</div>
<div class="t" style="right:646.0px;top:642.24px;text-align:right"><span style="letter-spacing:0.45px">2</span><span style="letter-spacing:0.45px">0</span><span style="letter-spacing:0.45px">3</span></div>
<div class="t" style="right:541.0px;top:642.24px;text-align:right"><span style="letter-spacing:-1.1px">1</span><span style="letter-spacing:0.45px">4</span><span style="letter-spacing:0.45px">4</span>.<span style="letter-spacing:0.45px">0</span><span style="letter-spacing:0.45px">0</span> KB</div>
<div class="t" style="left:703px;top:642.24px">InnoDB</div>
<div class="t" style="left:786px;top:642.24px;font-size:12.5px;letter-spacing:0.4px">2023-02-23 12:45:47</div>
<div class="t" style="left:1035.6px;top:642.24px;letter-spacing:0.45px">utf8mb...</div>
<div class="t" style="left:1099.5px;top:642.24px">短信日志</div>
<svg class="ab" style="left:317px;top:663.8px" width="16" height="17" viewBox="0 0 16 17"><defs><clipPath id="tc31"><rect x="0" y="0" width="16" height="16.3" rx="3"/></clipPath></defs><g clip-path="url(#tc31)"><rect x="0" y="0" width="16" height="4.2" fill="#0b78d6"/><rect x="0" y="4.2" width="6.3" height="4.999999999999999" fill="#eaf4fd"/><rect x="5.3" y="4.2" width="6.3999999999999995" height="4.999999999999999" fill="#c6e2fa"/><rect x="10.7" y="4.2" width="6.300000000000001" height="4.999999999999999" fill="#a2d1f7"/><rect x="0" y="8.2" width="6.3" height="5.0" fill="#c2e0f9"/><rect x="5.3" y="8.2" width="6.3999999999999995" height="5.0" fill="#a2d0f8"/><rect x="10.7" y="8.2" width="6.300000000000001" height="5.0" fill="#70baf6"/><rect x="0" y="12.2" width="6.3" height="5.100000000000001" fill="#a0cff7"/><rect x="5.3" y="12.2" width="6.3999999999999995" height="5.100000000000001" fill="#6eb9f4"/><rect x="10.7" y="12.2" width="6.300000000000001" height="5.100000000000001" fill="#47aaf6"/></g></svg>
<div class="t" style="left:340.8px;top:661.03px;letter-spacing:0.12px">system_sms_template</div>
<div class="t" style="right:646.0px;top:661.03px;text-align:right"><span style="letter-spacing:-1.1px">1</span><span style="letter-spacing:0.45px">0</span></div>
<div class="t" style="right:541.0px;top:661.03px;text-align:right"><span style="letter-spacing:-1.1px">1</span><span style="letter-spacing:0.45px">6</span>.<span style="letter-spacing:0.45px">0</span><span style="letter-spacing:0.45px">0</span> KB</div>
<div class="t" style="left:703px;top:661.03px">InnoDB</div>
<div class="t" style="left:786px;top:661.03px;font-size:12.5px;letter-spacing:0.4px">2023-02-23 12:45:47</div>
<div class="t" style="left:1035.6px;top:661.03px;letter-spacing:0.45px">utf8mb...</div>
<div class="t" style="left:1099.5px;top:661.03px">短信模板</div>
<svg class="ab" style="left:317px;top:682.59px" width="16" height="17" viewBox="0 0 16 17"><defs><clipPath id="tc32"><rect x="0" y="0" width="16" height="16.3" rx="3"/></clipPath></defs><g clip-path="url(#tc32)"><rect x="0" y="0" width="16" height="4.2" fill="#0b78d6"/><rect x="0" y="4.2" width="6.3" height="4.999999999999999" fill="#eaf4fd"/><rect x="5.3" y="4.2" width="6.3999999999999995" height="4.999999999999999" fill="#c6e2fa"/><rect x="10.7" y="4.2" width="6.300000000000001" height="4.999999999999999" fill="#a2d1f7"/><rect x="0" y="8.2" width="6.3" height="5.0" fill="#c2e0f9"/><rect x="5.3" y="8.2" width="6.3999999999999995" height="5.0" fill="#a2d0f8"/><rect x="10.7" y="8.2" width="6.300000000000001" height="5.0" fill="#70baf6"/><rect x="0" y="12.2" width="6.3" height="5.100000000000001" fill="#a0cff7"/><rect x="5.3" y="12.2" width="6.3999999999999995" height="5.100000000000001" fill="#6eb9f4"/><rect x="10.7" y="12.2" width="6.300000000000001" height="5.100000000000001" fill="#47aaf6"/></g></svg>
<div class="t" style="left:340.8px;top:679.82px;letter-spacing:0.12px">system_tenant</div>
<div class="t" style="right:646.0px;top:679.82px;text-align:right"><span style="letter-spacing:0.45px">5</span></div>
<div class="t" style="right:541.0px;top:679.82px;text-align:right"><span style="letter-spacing:-1.1px">1</span><span style="letter-spacing:0.45px">6</span>.<span style="letter-spacing:0.45px">0</span><span style="letter-spacing:0.45px">0</span> KB</div>
<div class="t" style="left:703px;top:679.82px">InnoDB</div>
<div class="t" style="left:786px;top:679.82px;font-size:12.5px;letter-spacing:0.4px">2023-02-27 13:40:09</div>
<div class="t" style="left:928.3px;top:679.82px;font-size:12.5px;letter-spacing:0.25px">2023-02-27 14:...</div>
<div class="t" style="left:1035.6px;top:679.82px;letter-spacing:0.45px">utf8mb...</div>
<div class="t" style="left:1099.5px;top:679.82px">租户表</div>
<svg class="ab" style="left:317px;top:701.38px" width="16" height="17" viewBox="0 0 16 17"><defs><clipPath id="tc33"><rect x="0" y="0" width="16" height="16.3" rx="3"/></clipPath></defs><g clip-path="url(#tc33)"><rect x="0" y="0" width="16" height="4.2" fill="#0b78d6"/><rect x="0" y="4.2" width="6.3" height="4.999999999999999" fill="#eaf4fd"/><rect x="5.3" y="4.2" width="6.3999999999999995" height="4.999999999999999" fill="#c6e2fa"/><rect x="10.7" y="4.2" width="6.300000000000001" height="4.999999999999999" fill="#a2d1f7"/><rect x="0" y="8.2" width="6.3" height="5.0" fill="#c2e0f9"/><rect x="5.3" y="8.2" width="6.3999999999999995" height="5.0" fill="#a2d0f8"/><rect x="10.7" y="8.2" width="6.300000000000001" height="5.0" fill="#70baf6"/><rect x="0" y="12.2" width="6.3" height="5.100000000000001" fill="#a0cff7"/><rect x="5.3" y="12.2" width="6.3999999999999995" height="5.100000000000001" fill="#6eb9f4"/><rect x="10.7" y="12.2" width="6.300000000000001" height="5.100000000000001" fill="#47aaf6"/></g></svg>
<div class="t" style="left:340.8px;top:698.61px;letter-spacing:0.12px">system_tenant_package</div>
<div class="t" style="right:646.0px;top:698.61px;text-align:right"><span style="letter-spacing:0.45px">2</span></div>
<div class="t" style="right:541.0px;top:698.61px;text-align:right"><span style="letter-spacing:-1.1px">1</span><span style="letter-spacing:0.45px">6</span>.<span style="letter-spacing:0.45px">0</span><span style="letter-spacing:0.45px">0</span> KB</div>
<div class="t" style="left:703px;top:698.61px">InnoDB</div>
<div class="t" style="left:786px;top:698.61px;font-size:12.5px;letter-spacing:0.4px">2023-02-23 12:45:47</div>
<div class="t" style="left:928.3px;top:698.61px;font-size:12.5px;letter-spacing:0.25px">2023-02-27 14:...</div>
<div class="t" style="left:1035.6px;top:698.61px;letter-spacing:0.45px">utf8mb...</div>
<div class="t" style="left:1099.5px;top:698.61px">租户套餐表</div>
<div class="ab" style="left:3.8px;top:7.7px;width:1234.4px;height:711.3px;box-sizing:border-box;border:3.3px solid #ff2805;border-radius:6px;box-shadow:0 0 1.5px rgba(0,0,0,0.6), inset 0 0 1.5px rgba(0,0,0,0.6)"></div>
<div class="ab" style="left:19.3px;top:332.7px;width:174.3px;height:29.8px;box-sizing:border-box;border:3.3px solid #ff2805;border-radius:6px"></div>
</body></html>
